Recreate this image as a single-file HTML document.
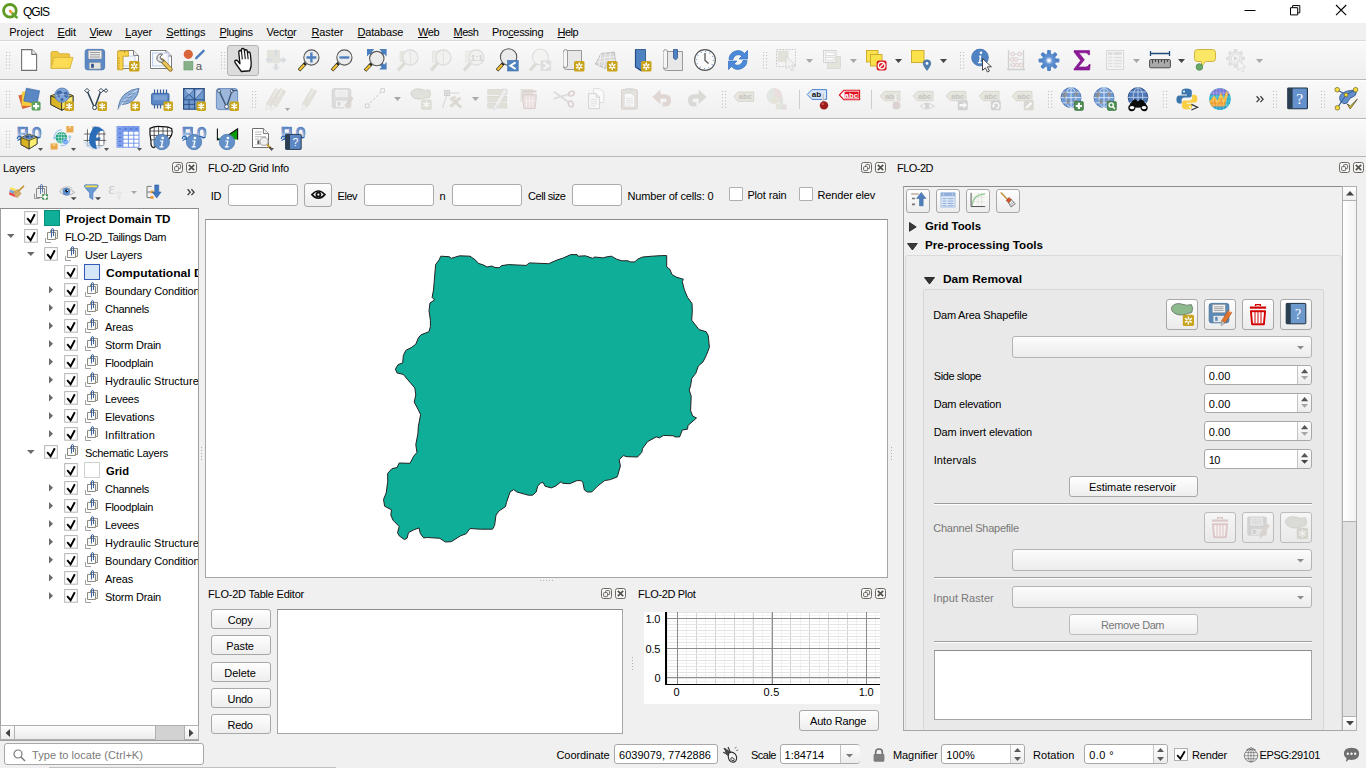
<!DOCTYPE html>
<html><head><meta charset="utf-8"><title>QGIS</title><style>
html,body{margin:0;padding:0}
body{width:1366px;height:768px;overflow:hidden;position:relative;background:#f0f0f0;font-family:"Liberation Sans",sans-serif;font-size:11px;color:#000}
body>div,body>span,body>svg{position:absolute;box-sizing:border-box}
svg{overflow:visible}
.t{white-space:nowrap}
u{text-decoration:underline;text-underline-offset:1px}
</style></head><body>
<div style="left:0px;top:0px;width:1366px;height:23px;background:#fff;"></div>
<svg style="left:2px;top:3px" width="18" height="18" viewBox="0 0 18 18"><circle cx="7.9" cy="7.8" r="6.3" fill="#fff" stroke="#5f9a24" stroke-width="2.8"/><path d="M7.9 7.9L10.6 10.5" stroke="#f08a24" stroke-width="2.2" stroke-linecap="round"/><path d="M9.4 9.4L11 11" stroke="#f4c84a" stroke-width="2"/><path d="M10.8 10.7L14.6 14.4" stroke="#62a02e" stroke-width="2.7" stroke-linecap="round"/></svg>
<span id="t1" class="t" style="left:23px;top:3.5px;font-size:12px;line-height:16px;color:#000;letter-spacing:-1.004px;">QGIS</span>
<svg style="left:1244px;top:4px" width="12" height="12"><path d="M0.5 6.5H11.5" stroke="#000" stroke-width="1" fill="none"/></svg>
<svg style="left:1290px;top:4.5px" width="11" height="11"><path d="M0.5 2.7H7.7V9.9H0.5Z M2.6 2.7V0.6H9.8V7.8H7.7" stroke="#000" stroke-width="1" fill="none"/></svg>
<svg style="left:1336px;top:5px" width="11" height="11"><path d="M0 0L10.2 10.2M10.2 0L0 10.2" stroke="#000" stroke-width="1.1" fill="none"/></svg>
<div style="left:0px;top:23px;width:1366px;height:18px;background:#f0f0f0;border-bottom:1px solid #d9d9d9;"></div>
<span id="t2" class="t" style="left:9.2px;top:24.5px;font-size:11px;line-height:15px;color:#000;letter-spacing:0.064px;">Pro<u>j</u>ect</span>
<span id="t3" class="t" style="left:57.5px;top:24.5px;font-size:11px;line-height:15px;color:#000;letter-spacing:-0.167px;"><u>E</u>dit</span>
<span id="t4" class="t" style="left:89.6px;top:24.5px;font-size:11px;line-height:15px;color:#000;letter-spacing:-0.414px;"><u>V</u>iew</span>
<span id="t5" class="t" style="left:125.2px;top:24.5px;font-size:11px;line-height:15px;color:#000;letter-spacing:-0.146px;"><u>L</u>ayer</span>
<span id="t6" class="t" style="left:166.3px;top:24.5px;font-size:11px;line-height:15px;color:#000;letter-spacing:-0.081px;"><u>S</u>ettings</span>
<span id="t7" class="t" style="left:219.6px;top:24.5px;font-size:11px;line-height:15px;color:#000;letter-spacing:-0.440px;"><u>P</u>lugins</span>
<span id="t8" class="t" style="left:266.4px;top:24.5px;font-size:11px;line-height:15px;color:#000;letter-spacing:-0.165px;">Vect<u>o</u>r</span>
<span id="t9" class="t" style="left:311.5px;top:24.5px;font-size:11px;line-height:15px;color:#000;letter-spacing:-0.118px;"><u>R</u>aster</span>
<span id="t10" class="t" style="left:357.6px;top:24.5px;font-size:11px;line-height:15px;color:#000;letter-spacing:-0.199px;"><u>D</u>atabase</span>
<span id="t11" class="t" style="left:418px;top:24.5px;font-size:11px;line-height:15px;color:#000;letter-spacing:-0.341px;"><u>W</u>eb</span>
<span id="t12" class="t" style="left:453.6px;top:24.5px;font-size:11px;line-height:15px;color:#000;letter-spacing:-0.527px;"><u>M</u>esh</span>
<span id="t13" class="t" style="left:492px;top:24.5px;font-size:11px;line-height:15px;color:#000;letter-spacing:-0.322px;">Pro<u>c</u>essing</span>
<span id="t14" class="t" style="left:557.5px;top:24.5px;font-size:11px;line-height:15px;color:#000;letter-spacing:-0.481px;"><u>H</u>elp</span>
<div style="left:0px;top:41px;width:1366px;height:39px;background:linear-gradient(#fff 0,#fff 1px,#f9f9f9 1px,#efefef 100%);border-bottom:1px solid #b8b8b8;"></div>
<div style="left:0px;top:80px;width:1366px;height:39px;background:linear-gradient(#fff 0,#fff 1px,#f9f9f9 1px,#efefef 100%);border-bottom:1px solid #b8b8b8;"></div>
<div style="left:0px;top:119px;width:1366px;height:38px;background:linear-gradient(#fff 0,#fff 1px,#f9f9f9 1px,#efefef 100%);border-bottom:1px solid #b8b8b8;"></div>
<svg style="left:5.6px;top:52px" width="6" height="22"><rect x="0" y="0.00" width="1.1" height="1.1" fill="#bcbcbc"/><rect x="3.2" y="0.00" width="1.1" height="1.1" fill="#bcbcbc"/><rect x="1" y="1.00" width="1" height="1" fill="#fff"/><rect x="4.2" y="1.00" width="1" height="1" fill="#fff"/><rect x="0" y="3.15" width="1.1" height="1.1" fill="#bcbcbc"/><rect x="3.2" y="3.15" width="1.1" height="1.1" fill="#bcbcbc"/><rect x="1" y="4.15" width="1" height="1" fill="#fff"/><rect x="4.2" y="4.15" width="1" height="1" fill="#fff"/><rect x="0" y="6.30" width="1.1" height="1.1" fill="#bcbcbc"/><rect x="3.2" y="6.30" width="1.1" height="1.1" fill="#bcbcbc"/><rect x="1" y="7.30" width="1" height="1" fill="#fff"/><rect x="4.2" y="7.30" width="1" height="1" fill="#fff"/><rect x="0" y="9.45" width="1.1" height="1.1" fill="#bcbcbc"/><rect x="3.2" y="9.45" width="1.1" height="1.1" fill="#bcbcbc"/><rect x="1" y="10.45" width="1" height="1" fill="#fff"/><rect x="4.2" y="10.45" width="1" height="1" fill="#fff"/><rect x="0" y="12.60" width="1.1" height="1.1" fill="#bcbcbc"/><rect x="3.2" y="12.60" width="1.1" height="1.1" fill="#bcbcbc"/><rect x="1" y="13.60" width="1" height="1" fill="#fff"/><rect x="4.2" y="13.60" width="1" height="1" fill="#fff"/><rect x="0" y="15.75" width="1.1" height="1.1" fill="#bcbcbc"/><rect x="3.2" y="15.75" width="1.1" height="1.1" fill="#bcbcbc"/><rect x="1" y="16.75" width="1" height="1" fill="#fff"/><rect x="4.2" y="16.75" width="1" height="1" fill="#fff"/></svg>
<svg style="left:17.0px;top:48.0px" width="24" height="24" viewBox="0 0 24 24"><path d="M4.6 1.6H14.8L19.6 6.4V22.4H4.6Z" fill="#fff" stroke="#707070" stroke-width="1.1"/><path d="M14.8 1.6V6.4H19.6" fill="#f0f0f0" stroke="#707070" stroke-width="1.1" stroke-linejoin="round"/></svg>
<svg style="left:50.0px;top:48.0px" width="24" height="24" viewBox="0 0 24 24"><path d="M1 20V4.8Q1 3.6 2.2 3.6H7.6L9.4 5.8H18.4Q19.6 5.8 19.6 7V20Z" fill="#f0c840" stroke="#d3ab34" stroke-width="0.9"/><path d="M4 9.4H23L20 20.4H1Z" fill="#fcdb55" stroke="#d8b23c" stroke-width="0.9" stroke-linejoin="round"/></svg>
<svg style="left:83.0px;top:48.0px" width="24" height="24" viewBox="0 0 24 24"><rect x="2.2" y="1.4" width="19.4" height="20.4" rx="2.4" fill="#5b89c6" stroke="#4a78b6" stroke-width="0.9"/><rect x="5.2" y="2.6" width="13.6" height="8.4" rx="0.8" fill="#f6f6f6" stroke="#8a8a8a" stroke-width="0.6"/><path d="M6.8 4.6H17.2M6.8 6.8H17.2M6.8 9H17.2" stroke="#7a7a7a" stroke-width="0.8"/><rect x="6.2" y="14.4" width="11.6" height="6.6" rx="0.6" fill="#e4e4e4" stroke="#8a8a8a" stroke-width="0.5"/><rect x="8.2" y="15.8" width="2.6" height="4" fill="#2f4f86"/></svg>
<svg style="left:116.0px;top:48.0px" width="24" height="24" viewBox="0 0 24 24"><path d="M3.5 2.5H17.5L22.5 7.5V20.5H3.5Z" fill="#fff" stroke="#7a7a7a" stroke-width="1"/><path d="M17.5 2.5V7.5H22.5" fill="#ececec" stroke="#7a7a7a" stroke-width="1"/><rect x="7" y="8" width="12" height="10" fill="#f4f6fb" stroke="#b9c6e4" stroke-width="0.8"/><path d="M1.6 3H12.4V8.2H7V21.8H1.6Z" fill="#f8d24a" stroke="#cfa42a" stroke-width="0.9"/><path d="M1.6 10H4M1.6 12.5H3.4M1.6 15H4M1.6 17.5H3.4M1.6 20H4M8.5 3V5" stroke="#b38a1c" stroke-width="0.7"/><rect x="13" y="13" width="10.5" height="10.5" rx="1.6" fill="#c8a41c"/><path d="M18.25 14.6V21.9M15.1 16.4L21.4 20.1M21.4 16.4L15.1 20.1" stroke="#fff" stroke-width="1.5"/><circle cx="18.25" cy="18.25" r="1.1" fill="#c8a41c"/></svg>
<svg style="left:149.0px;top:48.0px" width="24" height="24" viewBox="0 0 24 24"><path d="M1.5 2.5H17L22.5 8V20.5H1.5Z" fill="#fff" stroke="#7a7a7a" stroke-width="1"/><path d="M17 2.5V8H22.5" fill="#ececec" stroke="#7a7a7a" stroke-width="1"/><rect x="3.6" y="5" width="15.6" height="13" fill="#f6f8fc" stroke="#b4c4ea" stroke-width="0.9"/><path d="M13 12.5L21.5 21.5" stroke="#8b6b1e" stroke-width="4.4" stroke-linecap="round"/><path d="M13.4 12.8L21.4 21.2" stroke="#e9c75a" stroke-width="2.8" stroke-linecap="round"/><path d="M13.6 6.2A4.2 4.2 0 1 0 15.4 12.6L12.2 11.6L11 9L13.6 6.2Z" fill="#e8e8e8" stroke="#555" stroke-width="0.9" stroke-linejoin="round"/></svg>
<svg style="left:182.0px;top:48.0px" width="24" height="24" viewBox="0 0 24 24"><circle cx="6.3" cy="6.3" r="4.6" fill="#d9653a"/><rect x="1.9" y="13.4" width="9" height="8.6" fill="#86b088" stroke="#6c9c70" stroke-width="0.6"/><path d="M14.2 10.2L21.6 2.8" stroke="#4f7fbf" stroke-width="2.4" stroke-linecap="round"/><text x="13.8" y="21.6" font-family="Liberation Sans, sans-serif" font-size="11.5" fill="#555">a</text></svg>
<svg style="left:220.6px;top:52px" width="6" height="22"><rect x="0" y="0.00" width="1.1" height="1.1" fill="#bcbcbc"/><rect x="3.2" y="0.00" width="1.1" height="1.1" fill="#bcbcbc"/><rect x="1" y="1.00" width="1" height="1" fill="#fff"/><rect x="4.2" y="1.00" width="1" height="1" fill="#fff"/><rect x="0" y="3.15" width="1.1" height="1.1" fill="#bcbcbc"/><rect x="3.2" y="3.15" width="1.1" height="1.1" fill="#bcbcbc"/><rect x="1" y="4.15" width="1" height="1" fill="#fff"/><rect x="4.2" y="4.15" width="1" height="1" fill="#fff"/><rect x="0" y="6.30" width="1.1" height="1.1" fill="#bcbcbc"/><rect x="3.2" y="6.30" width="1.1" height="1.1" fill="#bcbcbc"/><rect x="1" y="7.30" width="1" height="1" fill="#fff"/><rect x="4.2" y="7.30" width="1" height="1" fill="#fff"/><rect x="0" y="9.45" width="1.1" height="1.1" fill="#bcbcbc"/><rect x="3.2" y="9.45" width="1.1" height="1.1" fill="#bcbcbc"/><rect x="1" y="10.45" width="1" height="1" fill="#fff"/><rect x="4.2" y="10.45" width="1" height="1" fill="#fff"/><rect x="0" y="12.60" width="1.1" height="1.1" fill="#bcbcbc"/><rect x="3.2" y="12.60" width="1.1" height="1.1" fill="#bcbcbc"/><rect x="1" y="13.60" width="1" height="1" fill="#fff"/><rect x="4.2" y="13.60" width="1" height="1" fill="#fff"/><rect x="0" y="15.75" width="1.1" height="1.1" fill="#bcbcbc"/><rect x="3.2" y="15.75" width="1.1" height="1.1" fill="#bcbcbc"/><rect x="1" y="16.75" width="1" height="1" fill="#fff"/><rect x="4.2" y="16.75" width="1" height="1" fill="#fff"/></svg>
<div style="left:227px;top:45px;width:32px;height:31px;background:#dcdcdc;border:1px solid #b4b4b4;border-radius:3px;"></div>
<svg style="left:231.0px;top:48.0px" width="24" height="24" viewBox="0 0 24 24"><g transform="translate(12 12) rotate(-6) scale(1 1.13) translate(-12 -11.6)"><path d="M9.2 21.6L4.2 13.8Q3 11.8 4.4 11.2Q5.8 10.8 7 12.4L8.6 14.6V4.6Q8.6 3 10 3Q11.4 3 11.4 4.6V3Q11.4 1.4 12.9 1.4Q14.4 1.4 14.4 3V4.4Q14.4 2.9 15.8 2.9Q17.2 2.9 17.2 4.4V6.4Q17.2 5 18.5 5Q19.9 5 19.9 6.6V14.4Q19.9 18 17.6 21.6Z" fill="#fff" stroke="#111" stroke-width="1.3" stroke-linejoin="round"/><path d="M11.4 4.6V11M14.4 4.4V11M17.2 6.4V11.4" stroke="#111" stroke-width="1.1"/></g></svg>
<svg style="left:264.0px;top:48.0px" width="24" height="24" viewBox="0 0 24 24"><rect x="3" y="2" width="13" height="13" fill="#e4e3dc"/><path d="M12 1L15.5 5H13.4V9H10.6V5H8.5ZM12 23L8.5 19H10.6V15.4H13.4V19H15.5ZM1.4 12L5.4 8.5V10.6H9V13.4H5.4V15.5ZM22.6 12L18.6 15.5V13.4H15V10.6H18.6V8.5Z" fill="#d8dcdf" stroke="#e8eaec" stroke-width="0.5"/></svg>
<svg style="left:297.0px;top:48.0px" width="24" height="24" viewBox="0 0 24 24"><path d="M8.6 15.2L2 22.3" stroke="#222" stroke-width="3.4" stroke-linecap="butt"/><path d="M7.2 16.8L2.4 21.9" stroke="#f2c531" stroke-width="2.2"/><circle cx="14.4" cy="9.5" r="7.6" fill="#ebebeb" stroke="#5a5a5a" stroke-width="1.1"/><path d="M14.4 4.6V14.4M9.5 9.5H19.3" stroke="#4e80bf" stroke-width="2.4"/></svg>
<svg style="left:330.0px;top:48.0px" width="24" height="24" viewBox="0 0 24 24"><path d="M8.6 15.2L2 22.3" stroke="#222" stroke-width="3.4" stroke-linecap="butt"/><path d="M7.2 16.8L2.4 21.9" stroke="#f2c531" stroke-width="2.2"/><circle cx="14.4" cy="9.5" r="7.6" fill="#ebebeb" stroke="#5a5a5a" stroke-width="1.1"/><path d="M9.5 9.5H19.3" stroke="#4e80bf" stroke-width="2.4"/></svg>
<svg style="left:363.0px;top:48.0px" width="24" height="24" viewBox="0 0 24 24"><path d="M4 1H11.4L9 3.4L12.4 6.8L9.8 9.4L6.4 6L4 8.4Z" fill="#4a7ebf"/><path d="M23.6 1V8.4L21.2 6L17.8 9.4L15.2 6.8L18.6 3.4L16.2 1Z" fill="#4a7ebf"/><path d="M23.6 21.4H16.2L18.6 19L15.2 15.6L17.8 13L21.2 16.4L23.6 14Z" fill="#4a7ebf"/><path d="M8.6 15.6L2 22.6" stroke="#222" stroke-width="3.4"/><path d="M7.2 17.2L2.4 22.2" stroke="#f2c531" stroke-width="2.2"/><circle cx="13.8" cy="10.6" r="7.2" fill="#ebebeb" stroke="#5a5a5a" stroke-width="1.1"/></svg>
<svg style="left:396.0px;top:48.0px" width="24" height="24" viewBox="0 0 24 24"><rect x="3.5" y="3" width="9" height="11" fill="#e6e5de"/><path d="M8.6 15.2L2 22.3" stroke="#dcdcd6" stroke-width="3.2"/><circle cx="14.4" cy="9.5" r="7.6" fill="#f1f1ef" stroke="#dadada" stroke-width="1.1"/><path d="M14.4 3V16" stroke="#e2e2e2" stroke-width="1"/></svg>
<svg style="left:429.0px;top:48.0px" width="24" height="24" viewBox="0 0 24 24"><rect x="3.5" y="3" width="9" height="11" fill="#ecebe6" stroke="#e0e0e0" stroke-width="0.6"/><path d="M8.6 15.2L2 22.3" stroke="#dcdcd6" stroke-width="3.2"/><circle cx="14.4" cy="9.5" r="7.6" fill="#f1f1ef" stroke="#dadada" stroke-width="1.1"/><path d="M14.4 3V16" stroke="#e2e2e2" stroke-width="1"/></svg>
<svg style="left:462.0px;top:48.0px" width="24" height="24" viewBox="0 0 24 24"><rect x="3.5" y="3" width="9" height="11" fill="#efeeea" stroke="#e2e2e2" stroke-width="0.6"/><path d="M8.6 15.2L2 22.3" stroke="#dcdcd6" stroke-width="3.2"/><circle cx="14.4" cy="9.5" r="7.6" fill="#f1f1ef" stroke="#dadada" stroke-width="1.1"/><text x="8.6" y="13" font-family="Liberation Sans, sans-serif" font-size="8.5" font-weight="bold" fill="#d2d2d2">1:1</text></svg>
<svg style="left:495.0px;top:48.0px" width="24" height="24" viewBox="0 0 24 24"><path d="M8.6 15.2L2 22.3" stroke="#222" stroke-width="3.4" stroke-linecap="butt"/><path d="M7.2 16.8L2.4 21.9" stroke="#f2c531" stroke-width="2.2"/><circle cx="13.6" cy="9" r="8.2" fill="#ebebeb" stroke="#5a5a5a" stroke-width="1.1"/><rect x="12.6" y="12.4" width="10.6" height="10.6" fill="#4f82c0" stroke="#3f6ea8" stroke-width="0.6"/><path d="M20.6 14.4L15.4 17.7L20.6 21" stroke="#fff" stroke-width="2" fill="none"/></svg>
<svg style="left:528.0px;top:48.0px" width="24" height="24" viewBox="0 0 24 24"><path d="M8.6 15.2L2 22.3" stroke="#dcdcd6" stroke-width="3.2"/><circle cx="12.4" cy="9" r="8" fill="#f3f3f1" stroke="#dcdcdc" stroke-width="1.1"/><rect x="12.6" y="12.4" width="10.6" height="10.6" fill="#dedede"/><path d="M15.4 14.4L20.6 17.7L15.4 21" stroke="#f6f6f6" stroke-width="2" fill="none"/></svg>
<svg style="left:561.0px;top:48.0px" width="24" height="24" viewBox="0 0 24 24"><path d="M4 2.5H20.5V21.5H5.5Q2.5 21.5 2.5 18.5V4Z" fill="#e8e8e8" stroke="#8f8f8f" stroke-width="0.9"/><path d="M2.5 4Q2.5 1.5 4.5 1.5Q6.5 1.5 6.5 4V18Q6.5 19.5 4.5 19.5Q2.5 19.5 2.5 18" fill="#f6f6f6" stroke="#8f8f8f" stroke-width="0.9"/><rect x="13" y="13" width="10.5" height="10.5" rx="1.6" fill="#c8a41c"/><path d="M18.25 14.6V21.9M15.1 16.4L21.4 20.1M21.4 16.4L15.1 20.1" stroke="#fff" stroke-width="1.5"/><circle cx="18.25" cy="18.25" r="1.1" fill="#c8a41c"/></svg>
<svg style="left:594.0px;top:48.0px" width="24" height="24" viewBox="0 0 24 24"><path d="M1.5 16L7 5.5L20.5 4L21.5 14.5L11 20.5Z" fill="#d9d9d9" stroke="#b4b4b4" stroke-width="0.8"/><path d="M4.5 10.5L20.8 8.5M3 14L21 12M7 5.5L5 18M11.5 5L9.5 20M16 4.5L16 17.5" stroke="#f2f2f2" stroke-width="0.9"/><rect x="13" y="13" width="10.5" height="10.5" rx="1.6" fill="#c8a41c"/><path d="M18.25 14.6V21.9M15.1 16.4L21.4 20.1M21.4 16.4L15.1 20.1" stroke="#fff" stroke-width="1.5"/><circle cx="18.25" cy="18.25" r="1.1" fill="#c8a41c"/></svg>
<svg style="left:628.0px;top:48.0px" width="24" height="24" viewBox="0 0 24 24"><path d="M7.5 1.5H17.5V21L13.5 23L7.5 19Z" fill="#4f82c0" stroke="#2f5590" stroke-width="0.9"/><path d="M7.5 1.5V19L13 22.6" fill="none" stroke="#244a86" stroke-width="1.2"/><rect x="13" y="13" width="10.5" height="10.5" rx="1.6" fill="#c8a41c"/><path d="M18.25 14.6V21.9M15.1 16.4L21.4 20.1M21.4 16.4L15.1 20.1" stroke="#fff" stroke-width="1.5"/><circle cx="18.25" cy="18.25" r="1.1" fill="#c8a41c"/></svg>
<svg style="left:660.0px;top:48.0px" width="24" height="24" viewBox="0 0 24 24"><path d="M5 3.5H22.5V22.5H6.5Q3.5 22.5 3.5 19.5V5Z" fill="#e8e8e8" stroke="#8f8f8f" stroke-width="0.9"/><path d="M3.5 4Q3.5 1.5 5.5 1.5Q7.5 1.5 7.5 4V19Q7.5 20.5 5.5 20.5Q3.5 20.5 3.5 19" fill="#f6f6f6" stroke="#8f8f8f" stroke-width="0.9"/><path d="M13.5 1.5H17.5V10L15.5 12L13.5 10Z" fill="#4f82c0" stroke="#2f5590" stroke-width="0.8"/></svg>
<svg style="left:693.0px;top:48.0px" width="24" height="24" viewBox="0 0 24 24"><circle cx="12" cy="12" r="10.4" fill="#fbfbfb" stroke="#555" stroke-width="1.1"/><circle cx="12" cy="12" r="8.6" fill="none" stroke="#5b8fd0" stroke-width="1.2" stroke-dasharray="0.9 3.6"/><path d="M12 5V12.4L15.6 15.6" fill="none" stroke="#555" stroke-width="1.3"/></svg>
<svg style="left:726.0px;top:48.0px" width="24" height="24" viewBox="0 0 24 24"><path d="M3 11.5A9 9 0 0 1 18.5 5.5L21.5 2.5V11H13L16 8A5.5 5.5 0 0 0 7 11.5Z" fill="#4a8ad8" stroke="#2f6cc0" stroke-width="0.7"/><path d="M21 12.5A9 9 0 0 1 5.5 18.5L2.5 21.5V13H11L8 16A5.5 5.5 0 0 0 17 12.5Z" fill="#4a8ad8" stroke="#2f6cc0" stroke-width="0.7"/></svg>
<svg style="left:762.6px;top:52px" width="6" height="22"><rect x="0" y="0.00" width="1.1" height="1.1" fill="#bcbcbc"/><rect x="3.2" y="0.00" width="1.1" height="1.1" fill="#bcbcbc"/><rect x="1" y="1.00" width="1" height="1" fill="#fff"/><rect x="4.2" y="1.00" width="1" height="1" fill="#fff"/><rect x="0" y="3.15" width="1.1" height="1.1" fill="#bcbcbc"/><rect x="3.2" y="3.15" width="1.1" height="1.1" fill="#bcbcbc"/><rect x="1" y="4.15" width="1" height="1" fill="#fff"/><rect x="4.2" y="4.15" width="1" height="1" fill="#fff"/><rect x="0" y="6.30" width="1.1" height="1.1" fill="#bcbcbc"/><rect x="3.2" y="6.30" width="1.1" height="1.1" fill="#bcbcbc"/><rect x="1" y="7.30" width="1" height="1" fill="#fff"/><rect x="4.2" y="7.30" width="1" height="1" fill="#fff"/><rect x="0" y="9.45" width="1.1" height="1.1" fill="#bcbcbc"/><rect x="3.2" y="9.45" width="1.1" height="1.1" fill="#bcbcbc"/><rect x="1" y="10.45" width="1" height="1" fill="#fff"/><rect x="4.2" y="10.45" width="1" height="1" fill="#fff"/><rect x="0" y="12.60" width="1.1" height="1.1" fill="#bcbcbc"/><rect x="3.2" y="12.60" width="1.1" height="1.1" fill="#bcbcbc"/><rect x="1" y="13.60" width="1" height="1" fill="#fff"/><rect x="4.2" y="13.60" width="1" height="1" fill="#fff"/><rect x="0" y="15.75" width="1.1" height="1.1" fill="#bcbcbc"/><rect x="3.2" y="15.75" width="1.1" height="1.1" fill="#bcbcbc"/><rect x="1" y="16.75" width="1" height="1" fill="#fff"/><rect x="4.2" y="16.75" width="1" height="1" fill="#fff"/></svg>
<svg style="left:775.0px;top:48.0px" width="24" height="24" viewBox="0 0 24 24"><rect x="1.5" y="1.5" width="19" height="17" fill="none" stroke="#c8c8c8" stroke-width="1" stroke-dasharray="1.6 1.4"/><rect x="2.5" y="2.5" width="11" height="11.5" fill="#e2e1da"/><path d="M11 8L11 21L14.2 18L16.6 23L18.8 22L16.4 17.2H20.6Z" fill="#f2f2f2" stroke="#d6d6d6" stroke-width="0.9" stroke-linejoin="round"/></svg>
<svg style="left:805.5px;top:58.5px" width="7" height="4"><path d="M0 0H7L3.5 4Z" fill="#a8a8a8"/></svg>
<svg style="left:820.0px;top:48.0px" width="24" height="24" viewBox="0 0 24 24"><rect x="7.5" y="8.5" width="13" height="12" fill="#e3e2db" stroke="#d6d6d0" stroke-width="0.7"/><rect x="3.5" y="2.5" width="12.6" height="12" fill="#f2f2f2" stroke="#d2d2d2" stroke-width="0.9"/><rect x="5.5" y="4.8" width="8.6" height="2.6" fill="#fff" stroke="#d4d4d4" stroke-width="0.7"/><rect x="5.5" y="9.4" width="8.6" height="2.6" fill="#fff" stroke="#d4d4d4" stroke-width="0.7"/></svg>
<svg style="left:850.0px;top:58.5px" width="7" height="4"><path d="M0 0H7L3.5 4Z" fill="#a8a8a8"/></svg>
<svg style="left:865.0px;top:48.0px" width="24" height="24" viewBox="0 0 24 24"><rect x="1.5" y="2.5" width="11.5" height="11.5" fill="#fbe14a" stroke="#c9a72a" stroke-width="0.9"/><rect x="5.5" y="6.5" width="11.5" height="11.5" fill="#fbe14a" stroke="#c9a72a" stroke-width="0.9"/><rect x="11.6" y="12.6" width="10" height="10" rx="2" fill="#d8232a"/><circle cx="16.6" cy="17.6" r="3.3" fill="#d8232a" stroke="#fff" stroke-width="1.3"/><path d="M14.4 19.8L18.8 15.4" stroke="#fff" stroke-width="1.3"/></svg>
<svg style="left:895.0px;top:58.5px" width="7" height="4"><path d="M0 0H7L3.5 4Z" fill="#444"/></svg>
<svg style="left:910.0px;top:48.0px" width="24" height="24" viewBox="0 0 24 24"><rect x="1.5" y="2.5" width="12.5" height="12" fill="#fbe14a" stroke="#c9a72a" stroke-width="0.9"/><path d="M17 22.5Q13.2 17.6 13.2 15.6A3.8 3.8 0 0 1 20.8 15.6Q20.8 17.6 17 22.5Z" fill="#4f7fae" stroke="#3f6a96" stroke-width="0.6"/><circle cx="17" cy="15.4" r="1.4" fill="#fff"/></svg>
<svg style="left:940.0px;top:58.5px" width="7" height="4"><path d="M0 0H7L3.5 4Z" fill="#444"/></svg>
<svg style="left:959.6px;top:52px" width="6" height="22"><rect x="0" y="0.00" width="1.1" height="1.1" fill="#bcbcbc"/><rect x="3.2" y="0.00" width="1.1" height="1.1" fill="#bcbcbc"/><rect x="1" y="1.00" width="1" height="1" fill="#fff"/><rect x="4.2" y="1.00" width="1" height="1" fill="#fff"/><rect x="0" y="3.15" width="1.1" height="1.1" fill="#bcbcbc"/><rect x="3.2" y="3.15" width="1.1" height="1.1" fill="#bcbcbc"/><rect x="1" y="4.15" width="1" height="1" fill="#fff"/><rect x="4.2" y="4.15" width="1" height="1" fill="#fff"/><rect x="0" y="6.30" width="1.1" height="1.1" fill="#bcbcbc"/><rect x="3.2" y="6.30" width="1.1" height="1.1" fill="#bcbcbc"/><rect x="1" y="7.30" width="1" height="1" fill="#fff"/><rect x="4.2" y="7.30" width="1" height="1" fill="#fff"/><rect x="0" y="9.45" width="1.1" height="1.1" fill="#bcbcbc"/><rect x="3.2" y="9.45" width="1.1" height="1.1" fill="#bcbcbc"/><rect x="1" y="10.45" width="1" height="1" fill="#fff"/><rect x="4.2" y="10.45" width="1" height="1" fill="#fff"/><rect x="0" y="12.60" width="1.1" height="1.1" fill="#bcbcbc"/><rect x="3.2" y="12.60" width="1.1" height="1.1" fill="#bcbcbc"/><rect x="1" y="13.60" width="1" height="1" fill="#fff"/><rect x="4.2" y="13.60" width="1" height="1" fill="#fff"/><rect x="0" y="15.75" width="1.1" height="1.1" fill="#bcbcbc"/><rect x="3.2" y="15.75" width="1.1" height="1.1" fill="#bcbcbc"/><rect x="1" y="16.75" width="1" height="1" fill="#fff"/><rect x="4.2" y="16.75" width="1" height="1" fill="#fff"/></svg>
<svg style="left:970.0px;top:48.0px" width="24" height="24" viewBox="0 0 24 24"><circle cx="10" cy="9.5" r="8.4" fill="#4f82c3" stroke="#3e6fae" stroke-width="0.7"/><path d="M9.2 7.6H11.4L10.4 14H11.8L11.6 15.2H7.8L8 14H9L9.7 8.8H8.9Z" fill="#fff"/><circle cx="11" cy="4.8" r="1.3" fill="#fff"/><path d="M12.5 10.5L12.5 22.4L15.4 19.8L17.4 24L19.4 23L17.4 18.8H21.4Z" fill="#fff" stroke="#333" stroke-width="0.9" stroke-linejoin="round"/></svg>
<svg style="left:1003.5px;top:48.0px" width="24" height="24" viewBox="0 0 24 24"><path d="M4.5 2V21M19.5 2V21M3 21.5H21" stroke="#d0d0d0" stroke-width="1.3" fill="none"/><path d="M4.5 6H19.5M4.5 11.5H19.5M4.5 17H19.5" stroke="#d8d8d8" stroke-width="0.9"/><g fill="#f2eaea" stroke="#d8cccc" stroke-width="0.8"><circle cx="8.8" cy="6" r="2"/><circle cx="15.6" cy="6" r="2"/><circle cx="8" cy="11.5" r="2"/><circle cx="12" cy="11.5" r="2"/><circle cx="9" cy="17" r="2"/><circle cx="13" cy="17" r="2"/><circle cx="17" cy="17" r="2"/></g></svg>
<svg style="left:1036.5px;top:48.0px" width="24" height="24" viewBox="0 0 24 24"><g transform="translate(12 12.5)"><g fill="#4f82c6"><rect x="-1.9" y="-10.4" width="3.8" height="20.8" rx="1"/><rect x="-1.9" y="-10.4" width="3.8" height="20.8" rx="1" transform="rotate(45)"/><rect x="-1.9" y="-10.4" width="3.8" height="20.8" rx="1" transform="rotate(90)"/><rect x="-1.9" y="-10.4" width="3.8" height="20.8" rx="1" transform="rotate(135)"/></g><circle r="6.8" fill="#5d8fd0" stroke="#4f82c6" stroke-width="0.6"/><circle r="3.4" fill="#8fb2e0"/><circle r="2" fill="#f2f5fa"/></g></svg>
<svg style="left:1069.5px;top:48.0px" width="24" height="24" viewBox="0 0 24 24"><path d="M4 2.6H19.6V6.8H18.4Q18 4.8 15.6 4.8H8.8L14.4 11.8L8.4 19H16Q18.4 19 19 16.6H20.2L19.6 22H4V21L10.6 12.6L4 4Z" fill="#8c1a97" stroke="#7a1186" stroke-width="0.6"/></svg>
<svg style="left:1102.5px;top:48.0px" width="24" height="24" viewBox="0 0 24 24"><rect x="3.5" y="2.5" width="17" height="19" fill="#f4f4f4" stroke="#d8d8d8" stroke-width="1"/><rect x="5" y="4" width="4.6" height="3" fill="#dedede"/><rect x="10.8" y="4" width="8" height="3" fill="#dedede"/><path d="M5 9.5H9.6M10.8 9.5H18.8M5 12.5H9.6M10.8 12.5H18.8M5 15.5H9.6M10.8 15.5H18.8M5 18.5H9.6M10.8 18.5H18.8" stroke="#e0e0e0" stroke-width="1.4"/></svg>
<svg style="left:1133.0px;top:58.5px" width="7" height="4"><path d="M0 0H7L3.5 4Z" fill="#a8a8a8"/></svg>
<svg style="left:1147.5px;top:48.0px" width="24" height="24" viewBox="0 0 24 24"><path d="M2.5 3V8M21.5 3V8M2.5 5.5H21.5" stroke="#1f4a7d" stroke-width="1.3" fill="none"/><rect x="1.6" y="11.6" width="20.8" height="8.2" rx="1" fill="#a9a9a9" stroke="#4a4a4a" stroke-width="1"/><path d="M4.5 12V15.4M7.5 12V14M10.5 12V15.4M13.5 12V14M16.5 12V15.4M19.5 12V14" stroke="#3a3a3a" stroke-width="0.9"/></svg>
<svg style="left:1178.0px;top:58.5px" width="7" height="4"><path d="M0 0H7L3.5 4Z" fill="#444"/></svg>
<svg style="left:1192.5px;top:48.0px" width="24" height="24" viewBox="0 0 24 24"><path d="M4.6 1.5H19.4Q22.5 1.5 22.5 4.6V10.4Q22.5 13.5 19.4 13.5H12.5L8.5 18.5V13.5H4.6Q1.5 13.5 1.5 10.4V4.6Q1.5 1.5 4.6 1.5Z" fill="#fbe766" stroke="#c9ab34" stroke-width="0.9"/><circle cx="6.4" cy="19" r="3.3" fill="#6aa86a" stroke="#4e8a50" stroke-width="0.8"/></svg>
<svg style="left:1225.0px;top:48.0px" width="24" height="24" viewBox="0 0 24 24"><g transform="translate(10.5 10.5)"><g fill="#e0e0e0"><rect x="-1.8" y="-9.6" width="3.6" height="19.2" rx="1"/><rect x="-1.8" y="-9.6" width="3.6" height="19.2" rx="1" transform="rotate(45)"/><rect x="-1.8" y="-9.6" width="3.6" height="19.2" rx="1" transform="rotate(90)"/><rect x="-1.8" y="-9.6" width="3.6" height="19.2" rx="1" transform="rotate(135)"/></g><circle r="6.6" fill="#ececec" stroke="#d8d8d8" stroke-width="0.8"/><circle r="4.2" fill="#f6f6f6" stroke="#dadada" stroke-width="0.8"/><path d="M-1.6 -2.6L2.6 0L-1.6 2.6Z" fill="#d6d6d6"/></g><path d="M13 12L13 22.4L15.6 20L17.4 23.8L19.2 23L17.4 19.2H21Z" fill="#f6f6f6" stroke="#d8d8d8" stroke-width="0.8" stroke-linejoin="round"/></svg>
<svg style="left:1256.0px;top:58.5px" width="7" height="4"><path d="M0 0H7L3.5 4Z" fill="#a8a8a8"/></svg>
<svg style="left:5.6px;top:91px" width="6" height="22"><rect x="0" y="0.00" width="1.1" height="1.1" fill="#bcbcbc"/><rect x="3.2" y="0.00" width="1.1" height="1.1" fill="#bcbcbc"/><rect x="1" y="1.00" width="1" height="1" fill="#fff"/><rect x="4.2" y="1.00" width="1" height="1" fill="#fff"/><rect x="0" y="3.15" width="1.1" height="1.1" fill="#bcbcbc"/><rect x="3.2" y="3.15" width="1.1" height="1.1" fill="#bcbcbc"/><rect x="1" y="4.15" width="1" height="1" fill="#fff"/><rect x="4.2" y="4.15" width="1" height="1" fill="#fff"/><rect x="0" y="6.30" width="1.1" height="1.1" fill="#bcbcbc"/><rect x="3.2" y="6.30" width="1.1" height="1.1" fill="#bcbcbc"/><rect x="1" y="7.30" width="1" height="1" fill="#fff"/><rect x="4.2" y="7.30" width="1" height="1" fill="#fff"/><rect x="0" y="9.45" width="1.1" height="1.1" fill="#bcbcbc"/><rect x="3.2" y="9.45" width="1.1" height="1.1" fill="#bcbcbc"/><rect x="1" y="10.45" width="1" height="1" fill="#fff"/><rect x="4.2" y="10.45" width="1" height="1" fill="#fff"/><rect x="0" y="12.60" width="1.1" height="1.1" fill="#bcbcbc"/><rect x="3.2" y="12.60" width="1.1" height="1.1" fill="#bcbcbc"/><rect x="1" y="13.60" width="1" height="1" fill="#fff"/><rect x="4.2" y="13.60" width="1" height="1" fill="#fff"/><rect x="0" y="15.75" width="1.1" height="1.1" fill="#bcbcbc"/><rect x="3.2" y="15.75" width="1.1" height="1.1" fill="#bcbcbc"/><rect x="1" y="16.75" width="1" height="1" fill="#fff"/><rect x="4.2" y="16.75" width="1" height="1" fill="#fff"/></svg>
<svg style="left:17.0px;top:87.0px" width="24" height="24" viewBox="0 0 24 24"><path d="M1.4 8.6L10 6L14 19.4L5.4 22Z" fill="#d9663a"/><path d="M5 4.4L15.6 4.6L15.2 19L4.6 18.8Z" fill="#f4cc3e"/><path d="M9.4 1.2L22.6 3.8L20 16.6L6.8 14Z" fill="#5b88c4" stroke="#3f6aa6" stroke-width="0.7"/><rect x="14.6" y="14.6" width="9" height="9" rx="1.6" fill="#5da15f"/><path d="M19.1 16V22.2M16 19.1H22.2" stroke="#fff" stroke-width="2.1"/></svg>
<svg style="left:50.0px;top:87.0px" width="24" height="24" viewBox="0 0 24 24"><path d="M0.8 8.8L12 4.6L23 8.6V17.4L12 23.2L0.8 17.6Z" fill="#f3d232" stroke="#333" stroke-width="0.9" stroke-linejoin="round"/><path d="M0.8 8.8L11.6 13.6V23M11.6 13.6L23 8.6" fill="none" stroke="#333" stroke-width="0.9"/><path d="M11.6 13.6L23 8.6V17.4L11.6 23.2Z" fill="#fae96b"/><path d="M11.6 13.6L23 8.6V17.4L11.6 23.2Z" fill="none" stroke="#333" stroke-width="0.9"/><path d="M0.8 8.8L11.6 13.6V23.2L0.8 17.6Z" fill="#d9b424" stroke="#333" stroke-width="0.9"/><circle cx="12" cy="8.2" r="7.2" fill="#7fa4d8" stroke="#4c74ae" stroke-width="0.7"/><path d="M6.4 5.6Q8.6 3 11 3.8L12.4 6L10 7.6L9.4 10.4L7 9ZM13.6 5.4L16.8 4.8L18.4 8L17 11L14.4 9.4ZM10.4 11.6L13 11L13.6 13.6L11 14.4Z" fill="#3f66a2"/><path d="M5.6 8.6Q12 6 18.6 8.4" fill="none" stroke="#b8cdec" stroke-width="0.6"/><rect x="14.5" y="14.5" width="9.5" height="9.5" rx="1.4" fill="#c9a61e"/><path d="M19.25 16V22.5M16.4 17.6L22.1 20.9M22.1 17.6L16.4 20.9" stroke="#fff" stroke-width="1.5"/></svg>
<svg style="left:83.0px;top:87.0px" width="24" height="24" viewBox="0 0 24 24"><path d="M4 3.6L11.6 21L18 3.6" fill="none" stroke="#2e4254" stroke-width="1.5"/><path d="M18 3.6H23" stroke="#2e4254" stroke-width="1.3"/><g fill="#fff" stroke="#2e4254" stroke-width="1"><path d="M4 1.4L6.2 3.6L4 5.8L1.8 3.6Z"/><path d="M18 1.4L20.2 3.6L18 5.8L15.8 3.6Z"/><path d="M23 1.6L24.6 3.6L23 5.6L21.2 3.6Z"/><circle cx="11.6" cy="20.6" r="2"/></g><rect x="14.5" y="14.5" width="9.5" height="9.5" rx="1.4" fill="#c9a61e"/><path d="M19.25 16V22.5M16.4 17.6L22.1 20.9M22.1 17.6L16.4 20.9" stroke="#fff" stroke-width="1.5"/></svg>
<svg style="left:116.0px;top:87.0px" width="24" height="24" viewBox="0 0 24 24"><path d="M2 23Q3 12 9 7Q15 2 23 1.4Q22.4 8 18 12.6Q13 17.4 5 17.6Z" fill="#8fb0d8" stroke="#4a6c9c" stroke-width="0.8"/><path d="M2 23Q8 12 21 3" fill="none" stroke="#e8eff8" stroke-width="1"/><path d="M6.5 15L13 13.4M9 11.4L16 9.6M12 8L19 6" stroke="#4a6c9c" stroke-width="0.6"/><rect x="14.5" y="14.5" width="9.5" height="9.5" rx="1.4" fill="#c9a61e"/><path d="M19.25 16V22.5M16.4 17.6L22.1 20.9M22.1 17.6L16.4 20.9" stroke="#fff" stroke-width="1.5"/></svg>
<svg style="left:149.0px;top:87.0px" width="24" height="24" viewBox="0 0 24 24"><rect x="2.6" y="6.4" width="17.4" height="11.4" rx="1.2" fill="#5b88c4" stroke="#365f9c" stroke-width="0.9"/><rect x="4.6" y="8.2" width="13.4" height="5" fill="#7aa0d4"/><path d="M5.5 2.6V6.4M8.5 2.6V6.4M11.5 2.6V6.4M14.5 2.6V6.4M17.5 2.6V6.4M5.5 17.8V21.6M8.5 17.8V21.6M11.5 17.8V21.6" stroke="#365f9c" stroke-width="1.2"/><rect x="14.5" y="14.5" width="9.5" height="9.5" rx="1.4" fill="#c9a61e"/><path d="M19.25 16V22.5M16.4 17.6L22.1 20.9M22.1 17.6L16.4 20.9" stroke="#fff" stroke-width="1.5"/></svg>
<svg style="left:182.0px;top:87.0px" width="24" height="24" viewBox="0 0 24 24"><rect x="1.6" y="1.6" width="20.6" height="20.6" fill="#6f98cf" stroke="#274a7e" stroke-width="1.1"/><path d="M12.6 1.6V22.2M1.6 12.8H22.2M1.6 1.6L12.6 12.8M12.6 1.6L1.6 12.8M22.2 1.6L12.6 12.8M7 12.8V22.2M1.6 17.4H12.6" stroke="#274a7e" stroke-width="0.9" fill="none"/><path d="M2.6 2.6H11.6L7 7.4ZM13.6 11.6V3.4L21.2 2.6Z" fill="#a9c3e6"/><rect x="14.5" y="14.5" width="9.5" height="9.5" rx="1.4" fill="#c9a61e"/><path d="M19.25 16V22.5M16.4 17.6L22.1 20.9M22.1 17.6L16.4 20.9" stroke="#fff" stroke-width="1.5"/></svg>
<svg style="left:215.0px;top:87.0px" width="24" height="24" viewBox="0 0 24 24"><rect x="1.4" y="1.6" width="21.2" height="21" rx="2.6" fill="#9db7dc" stroke="#6d8fc0" stroke-width="1"/><path d="M4 3.6L11.6 20L17 3.6" fill="none" stroke="#3d5878" stroke-width="1.4"/><g fill="#e9eef6" stroke="#3d5878" stroke-width="0.9"><circle cx="4" cy="3.8" r="1.6"/><circle cx="17" cy="3.8" r="1.6"/><circle cx="11.6" cy="19.6" r="2"/></g><path d="M17 3.6H22" stroke="#3d5878" stroke-width="1.1"/><rect x="14.5" y="14.5" width="9.5" height="9.5" rx="1.4" fill="#c9a61e"/><path d="M19.25 16V22.5M16.4 17.6L22.1 20.9M22.1 17.6L16.4 20.9" stroke="#fff" stroke-width="1.5"/></svg>
<svg style="left:251.6px;top:91px" width="6" height="22"><rect x="0" y="0.00" width="1.1" height="1.1" fill="#bcbcbc"/><rect x="3.2" y="0.00" width="1.1" height="1.1" fill="#bcbcbc"/><rect x="1" y="1.00" width="1" height="1" fill="#fff"/><rect x="4.2" y="1.00" width="1" height="1" fill="#fff"/><rect x="0" y="3.15" width="1.1" height="1.1" fill="#bcbcbc"/><rect x="3.2" y="3.15" width="1.1" height="1.1" fill="#bcbcbc"/><rect x="1" y="4.15" width="1" height="1" fill="#fff"/><rect x="4.2" y="4.15" width="1" height="1" fill="#fff"/><rect x="0" y="6.30" width="1.1" height="1.1" fill="#bcbcbc"/><rect x="3.2" y="6.30" width="1.1" height="1.1" fill="#bcbcbc"/><rect x="1" y="7.30" width="1" height="1" fill="#fff"/><rect x="4.2" y="7.30" width="1" height="1" fill="#fff"/><rect x="0" y="9.45" width="1.1" height="1.1" fill="#bcbcbc"/><rect x="3.2" y="9.45" width="1.1" height="1.1" fill="#bcbcbc"/><rect x="1" y="10.45" width="1" height="1" fill="#fff"/><rect x="4.2" y="10.45" width="1" height="1" fill="#fff"/><rect x="0" y="12.60" width="1.1" height="1.1" fill="#bcbcbc"/><rect x="3.2" y="12.60" width="1.1" height="1.1" fill="#bcbcbc"/><rect x="1" y="13.60" width="1" height="1" fill="#fff"/><rect x="4.2" y="13.60" width="1" height="1" fill="#fff"/><rect x="0" y="15.75" width="1.1" height="1.1" fill="#bcbcbc"/><rect x="3.2" y="15.75" width="1.1" height="1.1" fill="#bcbcbc"/><rect x="1" y="16.75" width="1" height="1" fill="#fff"/><rect x="4.2" y="16.75" width="1" height="1" fill="#fff"/></svg>
<svg style="left:264.0px;top:87.0px" width="24" height="24" viewBox="0 0 24 24"><g transform="translate(-1 0)"><path d="M12.6 1.6L17.6 4.4L8.6 19.6L3.6 16.8Z" fill="#e3e1da" stroke="#d6d4ce" stroke-width="0.6"/><path d="M3.6 16.8L8.6 19.6L3 23.2Z" fill="#f0efec" stroke="#dcdcdc" stroke-width="0.6"/><path d="M14.4 2.4L10 10" stroke="#eeeeea" stroke-width="1.4"/></g><g transform="translate(4 0)"><path d="M12.6 1.6L17.6 4.4L8.6 19.6L3.6 16.8Z" fill="#e3e1da" stroke="#d6d4ce" stroke-width="0.6"/><path d="M3.6 16.8L8.6 19.6L3 23.2Z" fill="#f0efec" stroke="#dcdcdc" stroke-width="0.6"/><path d="M14.4 2.4L10 10" stroke="#eeeeea" stroke-width="1.4"/></g></svg>
<svg style="left:284.5px;top:108.0px" width="5" height="3"><path d="M0 0H5L2.5 3Z" fill="#a8a8a8"/></svg>
<svg style="left:297.0px;top:87.0px" width="24" height="24" viewBox="0 0 24 24"><g transform="translate(2 0)"><path d="M12.6 1.6L17.6 4.4L8.6 19.6L3.6 16.8Z" fill="#e3e1da" stroke="#d6d4ce" stroke-width="0.6"/><path d="M3.6 16.8L8.6 19.6L3 23.2Z" fill="#f0efec" stroke="#dcdcdc" stroke-width="0.6"/><path d="M14.4 2.4L10 10" stroke="#eeeeea" stroke-width="1.4"/></g></svg>
<svg style="left:330.0px;top:87.0px" width="24" height="24" viewBox="0 0 24 24"><rect x="2.2" y="1.6" width="18.6" height="19.4" rx="2" fill="#dcdcdc" stroke="#d2d2d2" stroke-width="0.8"/><rect x="5" y="2.8" width="13" height="7.8" fill="#f6f6f6" stroke="#d8d8d8" stroke-width="0.6"/><path d="M6.4 5H16.6M6.4 7H16.6M6.4 9H16.6" stroke="#dedede" stroke-width="0.8"/><rect x="6" y="13.8" width="11" height="6.4" fill="#f0f0f0"/><rect x="7.8" y="15" width="2.4" height="3.8" fill="#d4d4d4"/><path d="M20.4 9L23.6 11L17.4 21L14.2 19Z" fill="#dcd6d2"/><path d="M14.2 19L17.4 21L13.6 23.4Z" fill="#eee"/></svg>
<svg style="left:363.0px;top:87.0px" width="24" height="24" viewBox="0 0 24 24"><path d="M4.2 18.6L19.6 3.6" stroke="#d4d4d4" stroke-width="1.1" stroke-dasharray="2.4 1.8"/><rect x="17.8" y="1.6" width="3.6" height="3.6" fill="#f6f6f6" stroke="#cfcfcf" stroke-width="0.9"/><rect x="2.4" y="17" width="3.6" height="3.6" fill="#f6f6f6" stroke="#cfcfcf" stroke-width="0.9"/></svg>
<svg style="left:394.0px;top:97.0px" width="7" height="4"><path d="M0 0H7L3.5 4Z" fill="#a8a8a8"/></svg>
<svg style="left:408.0px;top:87.0px" width="24" height="24" viewBox="0 0 24 24"><path d="M3.4 4.4Q7.6 0.4 13 2.2Q17.4 4.4 21.4 2.8Q23.6 6.6 21.6 10.4Q17 11 14.6 11.6Q12 12.6 8 11.8Q1.4 9.6 3.4 4.4Z" fill="#e1e1dc" stroke="#d0d0cc" stroke-width="0.9"/><rect x="13.2" y="12.4" width="10.4" height="10.4" rx="1.6" fill="#dcdbd4"/><path d="M18.4 14V21.2M15.3 15.8L21.5 19.4M21.5 15.8L15.3 19.4" stroke="#f4f4f2" stroke-width="1.4"/></svg>
<svg style="left:441.0px;top:87.0px" width="24" height="24" viewBox="0 0 24 24"><rect x="3.6" y="3.6" width="5" height="5" fill="#f4f4f4" stroke="#c8c8c8" stroke-width="0.9"/><circle cx="6.1" cy="6.1" r="1.3" fill="none" stroke="#bdbdbd" stroke-width="0.8"/><path d="M8.6 6.1H18.6M5.6 8.6L1.6 21" stroke="#d4d4d4" stroke-width="1" fill="none"/><path d="M9.4 19.8L19.4 10.6" stroke="#dcdad2" stroke-width="3.2"/><path d="M10 10.6L20 20.6" stroke="#d8d6ce" stroke-width="2.6"/><path d="M8.4 11.4L13.6 8.4L15.6 11L10.6 14.4Z" fill="#dedcd6"/></svg>
<svg style="left:471.5px;top:97.0px" width="7" height="4"><path d="M0 0H7L3.5 4Z" fill="#a8a8a8"/></svg>
<svg style="left:485.5px;top:87.0px" width="24" height="24" viewBox="0 0 24 24"><rect x="1.8" y="2.4" width="19" height="5" fill="#e1e0d8" stroke="#d4d3cc" stroke-width="0.6"/><rect x="1.8" y="9.2" width="19" height="5" fill="#e1e0d8" stroke="#d4d3cc" stroke-width="0.6"/><rect x="1.8" y="16" width="19" height="5" fill="#e1e0d8" stroke="#d4d3cc" stroke-width="0.6"/><path d="M17.6 1.4L21.6 3.6L12.4 19.6L8.4 17.4Z" fill="#efeeec" stroke="#d4d4d4" stroke-width="0.7"/><path d="M8.4 17.4L12.4 19.6L7.6 22.8Z" fill="#f4f4f4" stroke="#d4d4d4" stroke-width="0.6"/></svg>
<svg style="left:518.0px;top:87.0px" width="24" height="24" viewBox="0 0 24 24"><rect x="2.6" y="2" width="12.6" height="13" fill="#e2e1da"/><path d="M4.6 4.4H18.4" stroke="#dccfcf" stroke-width="2"/><path d="M4.6 7.6H18.4L17.2 21.6H5.8Z" fill="#e9dfdf" stroke="#d9caca" stroke-width="0.9"/><path d="M8.4 9.4V20M11.5 9.4V20M14.6 9.4V20M5.4 14H17.6" stroke="#f6f0f0" stroke-width="1.1"/></svg>
<svg style="left:551.5px;top:87.0px" width="24" height="24" viewBox="0 0 24 24"><path d="M2.4 5L17 15.4M2.4 11.6L17.4 7" stroke="#dcdcdc" stroke-width="1.8" stroke-linecap="round"/><ellipse cx="19.4" cy="6.6" rx="3" ry="2.2" fill="none" stroke="#dccfd0" stroke-width="1.5" transform="rotate(-25 19.4 6.6)"/><ellipse cx="18.8" cy="17" rx="2.4" ry="3" fill="none" stroke="#dccfd0" stroke-width="1.5" transform="rotate(-30 18.8 17)"/></svg>
<svg style="left:584.0px;top:87.0px" width="24" height="24" viewBox="0 0 24 24"><path d="M9.6 1.6H16L19.8 5.4V15.6H9.6Z" fill="#fafafa" stroke="#dadada" stroke-width="0.9"/><path d="M4.6 6.6H12L15.6 10.2V21.6H4.6Z" fill="#f8f8f8" stroke="#d2d2d2" stroke-width="1"/><path d="M12 6.6V10.2H15.6" fill="none" stroke="#d2d2d2" stroke-width="0.9"/><path d="M6.6 12.4H13.4M6.6 14.6H13.4M6.6 16.8H13.4M6.6 19H11.6" stroke="#dedede" stroke-width="0.9"/></svg>
<svg style="left:618.0px;top:87.0px" width="24" height="24" viewBox="0 0 24 24"><rect x="3.6" y="2.6" width="15.6" height="19.4" rx="1" fill="#e4e3dc" stroke="#d8cccc" stroke-width="1"/><rect x="7.4" y="1" width="8" height="3.6" rx="0.8" fill="#dcdcdc"/><path d="M6.2 6.2H13.4L16.8 9.6V20H6.2Z" fill="#f9f9f9" stroke="#d6d6d6" stroke-width="0.8"/><path d="M8 11.4H15M8 13.6H15M8 15.8H15M8 18H13" stroke="#dedede" stroke-width="0.9"/></svg>
<svg style="left:650.5px;top:87.0px" width="24" height="24" viewBox="0 0 24 24"><path d="M1.4 10L9.4 2.6V7.2H13.6Q20 7.2 20 13.4Q20 19.6 13.6 19.6H11.6V15.2H13.4Q15.8 15.2 15.8 13.2Q15.8 11.6 13.4 11.6H9.4V17.2Z" fill="#dfd6d2"/></svg>
<svg style="left:683.5px;top:87.0px" width="24" height="24" viewBox="0 0 24 24"><path d="M22.6 10L14.6 2.6V7.2H10.4Q4 7.2 4 13.4Q4 19.6 10.4 19.6H12.4V15.2H10.6Q8.2 15.2 8.2 13.2Q8.2 11.6 10.6 11.6H14.6V17.2Z" fill="#d9dad6"/></svg>
<svg style="left:721.6px;top:91px" width="6" height="22"><rect x="0" y="0.00" width="1.1" height="1.1" fill="#bcbcbc"/><rect x="3.2" y="0.00" width="1.1" height="1.1" fill="#bcbcbc"/><rect x="1" y="1.00" width="1" height="1" fill="#fff"/><rect x="4.2" y="1.00" width="1" height="1" fill="#fff"/><rect x="0" y="3.15" width="1.1" height="1.1" fill="#bcbcbc"/><rect x="3.2" y="3.15" width="1.1" height="1.1" fill="#bcbcbc"/><rect x="1" y="4.15" width="1" height="1" fill="#fff"/><rect x="4.2" y="4.15" width="1" height="1" fill="#fff"/><rect x="0" y="6.30" width="1.1" height="1.1" fill="#bcbcbc"/><rect x="3.2" y="6.30" width="1.1" height="1.1" fill="#bcbcbc"/><rect x="1" y="7.30" width="1" height="1" fill="#fff"/><rect x="4.2" y="7.30" width="1" height="1" fill="#fff"/><rect x="0" y="9.45" width="1.1" height="1.1" fill="#bcbcbc"/><rect x="3.2" y="9.45" width="1.1" height="1.1" fill="#bcbcbc"/><rect x="1" y="10.45" width="1" height="1" fill="#fff"/><rect x="4.2" y="10.45" width="1" height="1" fill="#fff"/><rect x="0" y="12.60" width="1.1" height="1.1" fill="#bcbcbc"/><rect x="3.2" y="12.60" width="1.1" height="1.1" fill="#bcbcbc"/><rect x="1" y="13.60" width="1" height="1" fill="#fff"/><rect x="4.2" y="13.60" width="1" height="1" fill="#fff"/><rect x="0" y="15.75" width="1.1" height="1.1" fill="#bcbcbc"/><rect x="3.2" y="15.75" width="1.1" height="1.1" fill="#bcbcbc"/><rect x="1" y="16.75" width="1" height="1" fill="#fff"/><rect x="4.2" y="16.75" width="1" height="1" fill="#fff"/></svg>
<svg style="left:732.0px;top:87.0px" width="24" height="24" viewBox="0 0 24 24"><g transform="translate(0.6 2.4)"><path d="M5.4 2.6H21V12H5.4L1.2 7.3Z" fill="#e6e5de" stroke="#d6d5ce" stroke-width="0.9" stroke-linejoin="round"/><text x="6.2" y="10" font-family="Liberation Sans, sans-serif" font-size="7.6" font-weight="bold" fill="#c4c4c0">abc</text></g></svg>
<svg style="left:765.0px;top:87.0px" width="24" height="24" viewBox="0 0 24 24"><circle cx="9.4" cy="9" r="7.4" fill="#e3e7e3" stroke="#d6dad6" stroke-width="0.6"/><path d="M9.4 9V1.6A7.4 7.4 0 0 1 16 12.4Z" fill="#eadede"/><path d="M9.4 9L16 12.4A7.4 7.4 0 0 1 5 15Z" fill="#e6e4d8"/><rect x="10.8" y="17" width="3.6" height="5.6" fill="#e4e3da"/><rect x="14.4" y="10.6" width="3.6" height="12" fill="#dfe3df"/><rect x="18" y="17.6" width="3.6" height="5" fill="#e6dcdc"/></svg>
<div style="left:799px;top:90px;width:1px;height:19px;background:#cdcdcd;"></div>
<svg style="left:806.0px;top:87.0px" width="24" height="24" viewBox="0 0 24 24"><path d="M6 2.6H20.6V12.4H6L1.2 7.5Z" fill="#d6e6fa" stroke="#4a82cc" stroke-width="1" stroke-linejoin="round"/><text x="5.8" y="10.4" font-family="Liberation Sans, sans-serif" font-size="8" font-weight="bold" fill="#111">ab</text><path d="M17.2 6.6V15" stroke="#eee" stroke-width="2.2" stroke-linecap="round"/><path d="M17.2 6.6V15" stroke="#888" stroke-width="0.6"/><circle cx="18" cy="18.4" r="4.2" fill="#9c1c1c"/><circle cx="16.8" cy="17" r="1.2" fill="#c65050"/></svg>
<svg style="left:837.5px;top:87.0px" width="24" height="24" viewBox="0 0 24 24"><path d="M6 3.2H21.6V12.8H6L1.4 8Z" fill="#fff" stroke="#e01020" stroke-width="1.1" stroke-linejoin="round"/><rect x="6.6" y="4.6" width="14" height="6.8" fill="#e01020"/><text x="6.6" y="10.6" font-family="Liberation Sans, sans-serif" font-size="7.8" font-weight="bold" fill="#fff">abc</text></svg>
<div style="left:871px;top:90px;width:1px;height:19px;background:#cdcdcd;"></div>
<svg style="left:878.5px;top:87.0px" width="24" height="24" viewBox="0 0 24 24"><g transform="translate(0 1.8)"><path d="M5.4 2.6H21V12H5.4L1.2 7.3Z" fill="#e6e5de" stroke="#d6d5ce" stroke-width="0.9" stroke-linejoin="round"/><text x="6.2" y="10" font-family="Liberation Sans, sans-serif" font-size="7.6" font-weight="bold" fill="#c4c4c0">abc</text></g><path d="M16.6 8V15" stroke="#f0f0f0" stroke-width="2"/><circle cx="17.4" cy="18.6" r="4" fill="#dcd2d2"/></svg>
<svg style="left:912.0px;top:87.0px" width="24" height="24" viewBox="0 0 24 24"><g transform="translate(0 1.8)"><path d="M5.4 2.6H21V12H5.4L1.2 7.3Z" fill="#e6e5de" stroke="#d6d5ce" stroke-width="0.9" stroke-linejoin="round"/><text x="6.2" y="10" font-family="Liberation Sans, sans-serif" font-size="7.6" font-weight="bold" fill="#c4c4c0">abc</text></g><path d="M8.4 19.2Q14.6 13.4 22.4 19.2Q14.6 24.6 8.4 19.2Z" fill="#f4f4f4" stroke="#cfcfcf" stroke-width="0.9"/><circle cx="15.2" cy="19" r="2.4" fill="#d4d4d4"/></svg>
<svg style="left:945.0px;top:87.0px" width="24" height="24" viewBox="0 0 24 24"><g transform="translate(0 1.8)"><path d="M5.4 2.6H21V12H5.4L1.2 7.3Z" fill="#e6e5de" stroke="#d6d5ce" stroke-width="0.9" stroke-linejoin="round"/><text x="6.2" y="10" font-family="Liberation Sans, sans-serif" font-size="7.6" font-weight="bold" fill="#c4c4c0">abc</text></g><rect x="12.8" y="13.2" width="10" height="10" rx="1.6" fill="#d2d2d2"/><path d="M14.6 17H18.6V14.8L22 18.2L18.6 21.6V19.4H14.6Z" fill="#f8f8f8"/></svg>
<svg style="left:978.0px;top:87.0px" width="24" height="24" viewBox="0 0 24 24"><g transform="translate(0 1.8)"><path d="M5.4 2.6H21V12H5.4L1.2 7.3Z" fill="#e6e5de" stroke="#d6d5ce" stroke-width="0.9" stroke-linejoin="round"/><text x="6.2" y="10" font-family="Liberation Sans, sans-serif" font-size="7.6" font-weight="bold" fill="#c4c4c0">abc</text></g><rect x="12.8" y="13.2" width="10" height="10" rx="1.6" fill="#d2d2d2"/><path d="M15.4 19.4A2.8 2.8 0 1 1 18.2 21.4" fill="none" stroke="#f8f8f8" stroke-width="1.5"/><path d="M13.6 18.4L15.6 21L17.4 18.4Z" fill="#f8f8f8"/></svg>
<svg style="left:1011.0px;top:87.0px" width="24" height="24" viewBox="0 0 24 24"><g transform="translate(0 1.8)"><path d="M5.4 2.6H21V12H5.4L1.2 7.3Z" fill="#e6e5de" stroke="#d6d5ce" stroke-width="0.9" stroke-linejoin="round"/><text x="6.2" y="10" font-family="Liberation Sans, sans-serif" font-size="7.6" font-weight="bold" fill="#c4c4c0">abc</text></g><rect x="12.8" y="13.2" width="10" height="10" rx="1.6" fill="#dad8d0"/><path d="M14.6 21.6L15.2 19.4L19.8 14.8L21.4 16.4L16.8 21Z" fill="#f8f8f8"/></svg>
<svg style="left:1047.6px;top:91px" width="6" height="22"><rect x="0" y="0.00" width="1.1" height="1.1" fill="#bcbcbc"/><rect x="3.2" y="0.00" width="1.1" height="1.1" fill="#bcbcbc"/><rect x="1" y="1.00" width="1" height="1" fill="#fff"/><rect x="4.2" y="1.00" width="1" height="1" fill="#fff"/><rect x="0" y="3.15" width="1.1" height="1.1" fill="#bcbcbc"/><rect x="3.2" y="3.15" width="1.1" height="1.1" fill="#bcbcbc"/><rect x="1" y="4.15" width="1" height="1" fill="#fff"/><rect x="4.2" y="4.15" width="1" height="1" fill="#fff"/><rect x="0" y="6.30" width="1.1" height="1.1" fill="#bcbcbc"/><rect x="3.2" y="6.30" width="1.1" height="1.1" fill="#bcbcbc"/><rect x="1" y="7.30" width="1" height="1" fill="#fff"/><rect x="4.2" y="7.30" width="1" height="1" fill="#fff"/><rect x="0" y="9.45" width="1.1" height="1.1" fill="#bcbcbc"/><rect x="3.2" y="9.45" width="1.1" height="1.1" fill="#bcbcbc"/><rect x="1" y="10.45" width="1" height="1" fill="#fff"/><rect x="4.2" y="10.45" width="1" height="1" fill="#fff"/><rect x="0" y="12.60" width="1.1" height="1.1" fill="#bcbcbc"/><rect x="3.2" y="12.60" width="1.1" height="1.1" fill="#bcbcbc"/><rect x="1" y="13.60" width="1" height="1" fill="#fff"/><rect x="4.2" y="13.60" width="1" height="1" fill="#fff"/><rect x="0" y="15.75" width="1.1" height="1.1" fill="#bcbcbc"/><rect x="3.2" y="15.75" width="1.1" height="1.1" fill="#bcbcbc"/><rect x="1" y="16.75" width="1" height="1" fill="#fff"/><rect x="4.2" y="16.75" width="1" height="1" fill="#fff"/></svg>
<svg style="left:1060.0px;top:87.0px" width="24" height="24" viewBox="0 0 24 24"><circle cx="11" cy="10.6" r="10" fill="#6f9bd6" stroke="#3f6cb0" stroke-width="0.8"/><path d="M11 0.6V20.6M1 10.6H21M2.6 5.4H19.4M2.6 15.8H19.4" stroke="#dfe9f6" stroke-width="0.9" fill="none"/><ellipse cx="11" cy="10.6" rx="5" ry="10" fill="none" stroke="#dfe9f6" stroke-width="0.9"/><path d="M3 6L6 4L7.6 8L5 11L2 9.6ZM14.6 4.4L18.4 6L17.4 10L14 9ZM6 13L9 12.4L10 16L7 17.4ZM13 13.4L17.6 12.6L17 16.4L13.6 17Z" fill="#8a8a8a" opacity="0.75"/><rect x="14.4" y="14.4" width="9" height="9" rx="1.4" fill="#4f8f52" stroke="#2f6a34" stroke-width="0.6"/><path d="M18.9 15.8V22M15.8 18.9H22" stroke="#fff" stroke-width="2"/></svg>
<svg style="left:1093.0px;top:87.0px" width="24" height="24" viewBox="0 0 24 24"><circle cx="11" cy="10.6" r="10" fill="#6f9bd6" stroke="#3f6cb0" stroke-width="0.8"/><path d="M11 0.6V20.6M1 10.6H21M2.6 5.4H19.4M2.6 15.8H19.4" stroke="#dfe9f6" stroke-width="0.9" fill="none"/><ellipse cx="11" cy="10.6" rx="5" ry="10" fill="none" stroke="#dfe9f6" stroke-width="0.9"/><path d="M3 6L6 4L7.6 8L5 11L2 9.6ZM14.6 4.4L18.4 6L17.4 10L14 9ZM6 13L9 12.4L10 16L7 17.4ZM13 13.4L17.6 12.6L17 16.4L13.6 17Z" fill="#8a8a8a" opacity="0.75"/><rect x="14.4" y="14.4" width="9" height="9" rx="1.4" fill="#4f8f52" stroke="#2f6a34" stroke-width="0.6"/><circle cx="18.2" cy="18" r="2.1" fill="none" stroke="#fff" stroke-width="1.3"/><path d="M19.8 19.8L22 22" stroke="#fff" stroke-width="1.5"/></svg>
<svg style="left:1126.0px;top:87.0px" width="24" height="24" viewBox="0 0 24 24"><circle cx="12" cy="10.4" r="9.8" fill="#4e78b6" stroke="#234a86" stroke-width="0.9"/><path d="M12 0.6V20M2.2 10.4H21.8M4 5H20M4 15.6H20" stroke="#c9d8ee" stroke-width="0.8" fill="none"/><ellipse cx="12" cy="10.4" rx="4.8" ry="9.8" fill="none" stroke="#c9d8ee" stroke-width="0.8"/><path d="M7 13.2L9.4 12.2L12 14.4L14.6 12.2L17 13.2L21.6 19.6A3.6 3.6 0 1 1 14.6 20.4H9.4A3.6 3.6 0 1 1 2.4 19.6Z" fill="#0c0c0c"/><ellipse cx="6" cy="20.6" rx="2.4" ry="1.7" fill="#fff"/><ellipse cx="18" cy="20.6" rx="2.4" ry="1.7" fill="#fff"/></svg>
<svg style="left:1162.6px;top:91px" width="6" height="22"><rect x="0" y="0.00" width="1.1" height="1.1" fill="#bcbcbc"/><rect x="3.2" y="0.00" width="1.1" height="1.1" fill="#bcbcbc"/><rect x="1" y="1.00" width="1" height="1" fill="#fff"/><rect x="4.2" y="1.00" width="1" height="1" fill="#fff"/><rect x="0" y="3.15" width="1.1" height="1.1" fill="#bcbcbc"/><rect x="3.2" y="3.15" width="1.1" height="1.1" fill="#bcbcbc"/><rect x="1" y="4.15" width="1" height="1" fill="#fff"/><rect x="4.2" y="4.15" width="1" height="1" fill="#fff"/><rect x="0" y="6.30" width="1.1" height="1.1" fill="#bcbcbc"/><rect x="3.2" y="6.30" width="1.1" height="1.1" fill="#bcbcbc"/><rect x="1" y="7.30" width="1" height="1" fill="#fff"/><rect x="4.2" y="7.30" width="1" height="1" fill="#fff"/><rect x="0" y="9.45" width="1.1" height="1.1" fill="#bcbcbc"/><rect x="3.2" y="9.45" width="1.1" height="1.1" fill="#bcbcbc"/><rect x="1" y="10.45" width="1" height="1" fill="#fff"/><rect x="4.2" y="10.45" width="1" height="1" fill="#fff"/><rect x="0" y="12.60" width="1.1" height="1.1" fill="#bcbcbc"/><rect x="3.2" y="12.60" width="1.1" height="1.1" fill="#bcbcbc"/><rect x="1" y="13.60" width="1" height="1" fill="#fff"/><rect x="4.2" y="13.60" width="1" height="1" fill="#fff"/><rect x="0" y="15.75" width="1.1" height="1.1" fill="#bcbcbc"/><rect x="3.2" y="15.75" width="1.1" height="1.1" fill="#bcbcbc"/><rect x="1" y="16.75" width="1" height="1" fill="#fff"/><rect x="4.2" y="16.75" width="1" height="1" fill="#fff"/></svg>
<svg style="left:1175.0px;top:87.0px" width="24" height="24" viewBox="0 0 24 24"><path d="M11.4 1.6Q6.6 1.6 6.6 4.6V7.4H12V8.4H4.4Q1.4 8.4 1.4 12.4Q1.4 16.4 4.4 16.4H6.6V13.6Q6.6 10.6 9.6 10.6H14.4Q16.8 10.6 16.8 8.2V4.6Q16.8 1.6 11.4 1.6Z" fill="#3a76ae"/><circle cx="9" cy="4.4" r="1" fill="#fff"/><path d="M12.4 22.6Q17.2 22.6 17.2 19.6V16.8H11.8V15.8H19.4Q22.4 15.8 22.4 11.8Q22.4 7.8 19.4 7.8H17.2V10.6Q17.2 13.6 14.2 13.6H9.4Q7 13.6 7 16V19.6Q7 22.6 12.4 22.6Z" fill="#f8cf45"/><circle cx="14.8" cy="19.8" r="1" fill="#fff"/><path d="M16.4 17.4L22.6 20.2L16.4 23" fill="none" stroke="#333" stroke-width="1.2"/></svg>
<svg style="left:1208.0px;top:87.0px" width="24" height="24" viewBox="0 0 24 24"><circle cx="12" cy="12" r="10.8" fill="#2fb3c6"/><path d="M2 8A10.8 10.8 0 0 1 22 8Z" fill="#7a78d8"/><path d="M1.4 14.6L6 8.4L9.6 13.4L13 5.6L15.6 12L18.4 4L20.4 6L16.4 20H4Z" fill="#f39a28"/><path d="M4.4 19.6A10.8 10.8 0 0 0 19.6 19.6Z" fill="#2a9fd0"/><path d="M2.4 15.6L6.2 10.4L9.6 15.6L12.8 8L15.6 15L18.6 6.4" fill="none" stroke="#f8c23a" stroke-width="1.4"/><path d="M5.4 3.4V20.6M8.8 1.6V22.4M12 1.2V22.8M15.2 1.6V22.4M18.6 3.4V20.6M1.4 10H22.6M1.4 14H22.6M2.6 18H21.4M2.6 6H21.4" stroke="#e8f4f8" stroke-width="0.35" opacity="0.8"/></svg>
<svg style="left:1255.7px;top:95.8px" width="8" height="6.4"><path d="M0.6 0.3L3.3 3.2L0.6 6.1M4.4 0.3L7.1 3.2L4.4 6.1" fill="none" stroke="#3a3a3a" stroke-width="1.25"/></svg>
<svg style="left:1272.6px;top:91px" width="6" height="22"><rect x="0" y="0.00" width="1.1" height="1.1" fill="#bcbcbc"/><rect x="3.2" y="0.00" width="1.1" height="1.1" fill="#bcbcbc"/><rect x="1" y="1.00" width="1" height="1" fill="#fff"/><rect x="4.2" y="1.00" width="1" height="1" fill="#fff"/><rect x="0" y="3.15" width="1.1" height="1.1" fill="#bcbcbc"/><rect x="3.2" y="3.15" width="1.1" height="1.1" fill="#bcbcbc"/><rect x="1" y="4.15" width="1" height="1" fill="#fff"/><rect x="4.2" y="4.15" width="1" height="1" fill="#fff"/><rect x="0" y="6.30" width="1.1" height="1.1" fill="#bcbcbc"/><rect x="3.2" y="6.30" width="1.1" height="1.1" fill="#bcbcbc"/><rect x="1" y="7.30" width="1" height="1" fill="#fff"/><rect x="4.2" y="7.30" width="1" height="1" fill="#fff"/><rect x="0" y="9.45" width="1.1" height="1.1" fill="#bcbcbc"/><rect x="3.2" y="9.45" width="1.1" height="1.1" fill="#bcbcbc"/><rect x="1" y="10.45" width="1" height="1" fill="#fff"/><rect x="4.2" y="10.45" width="1" height="1" fill="#fff"/><rect x="0" y="12.60" width="1.1" height="1.1" fill="#bcbcbc"/><rect x="3.2" y="12.60" width="1.1" height="1.1" fill="#bcbcbc"/><rect x="1" y="13.60" width="1" height="1" fill="#fff"/><rect x="4.2" y="13.60" width="1" height="1" fill="#fff"/><rect x="0" y="15.75" width="1.1" height="1.1" fill="#bcbcbc"/><rect x="3.2" y="15.75" width="1.1" height="1.1" fill="#bcbcbc"/><rect x="1" y="16.75" width="1" height="1" fill="#fff"/><rect x="4.2" y="16.75" width="1" height="1" fill="#fff"/></svg>
<svg style="left:1285.5px;top:87.0px" width="24" height="24" viewBox="0 0 24 24"><rect x="1.8" y="1" width="19.6" height="20.8" rx="0.8" fill="#6491cc" stroke="#1f3042" stroke-width="1.1"/><rect x="1.8" y="1" width="4.8" height="20.8" fill="#2b3f52"/><text x="10.2" y="16.6" font-family="Liberation Serif, serif" font-size="15.5" fill="#fff">?</text></svg>
<svg style="left:1320.6px;top:91px" width="6" height="22"><rect x="0" y="0.00" width="1.1" height="1.1" fill="#bcbcbc"/><rect x="3.2" y="0.00" width="1.1" height="1.1" fill="#bcbcbc"/><rect x="1" y="1.00" width="1" height="1" fill="#fff"/><rect x="4.2" y="1.00" width="1" height="1" fill="#fff"/><rect x="0" y="3.15" width="1.1" height="1.1" fill="#bcbcbc"/><rect x="3.2" y="3.15" width="1.1" height="1.1" fill="#bcbcbc"/><rect x="1" y="4.15" width="1" height="1" fill="#fff"/><rect x="4.2" y="4.15" width="1" height="1" fill="#fff"/><rect x="0" y="6.30" width="1.1" height="1.1" fill="#bcbcbc"/><rect x="3.2" y="6.30" width="1.1" height="1.1" fill="#bcbcbc"/><rect x="1" y="7.30" width="1" height="1" fill="#fff"/><rect x="4.2" y="7.30" width="1" height="1" fill="#fff"/><rect x="0" y="9.45" width="1.1" height="1.1" fill="#bcbcbc"/><rect x="3.2" y="9.45" width="1.1" height="1.1" fill="#bcbcbc"/><rect x="1" y="10.45" width="1" height="1" fill="#fff"/><rect x="4.2" y="10.45" width="1" height="1" fill="#fff"/><rect x="0" y="12.60" width="1.1" height="1.1" fill="#bcbcbc"/><rect x="3.2" y="12.60" width="1.1" height="1.1" fill="#bcbcbc"/><rect x="1" y="13.60" width="1" height="1" fill="#fff"/><rect x="4.2" y="13.60" width="1" height="1" fill="#fff"/><rect x="0" y="15.75" width="1.1" height="1.1" fill="#bcbcbc"/><rect x="3.2" y="15.75" width="1.1" height="1.1" fill="#bcbcbc"/><rect x="1" y="16.75" width="1" height="1" fill="#fff"/><rect x="4.2" y="16.75" width="1" height="1" fill="#fff"/></svg>
<svg style="left:1333.5px;top:87.0px" width="24" height="24" viewBox="0 0 24 24"><path d="M3.2 2.7L12.1 7.9L21.6 2.7M12.1 7.9L3.4 20.8" fill="none" stroke="#2f5690" stroke-width="1.1"/><path d="M8 6.4Q12 3.6 17 3.4Q21.6 2.4 22.2 5.4Q22.4 8.6 18.6 10Q15.6 10.6 14.6 13.6Q13 17.6 9.6 16.6Q5.4 14.6 5.6 10.4Q6 7.6 8 6.4Z" fill="#5b8ac8" stroke="#2f5690" stroke-width="0.9" opacity="0.95"/><path d="M12.1 7.9L21.6 2.7M12.1 7.9L7 15.4" fill="none" stroke="#2f5690" stroke-width="0.8"/><g fill="#f6dc3a" stroke="#6a6220" stroke-width="0.7"><circle cx="3.2" cy="2.7" r="2.3"/><circle cx="21.6" cy="2.7" r="2.3"/><circle cx="12.1" cy="7.9" r="1.9"/><circle cx="3.4" cy="20.8" r="2.3"/></g><path d="M13.3 17L16.2 21.9L23.3 12.2L16.4 19Z" fill="#f6dc3a" stroke="#4a4418" stroke-width="0.8" stroke-linejoin="round"/></svg>
<svg style="left:5.6px;top:130.5px" width="6" height="22"><rect x="0" y="0.00" width="1.1" height="1.1" fill="#bcbcbc"/><rect x="3.2" y="0.00" width="1.1" height="1.1" fill="#bcbcbc"/><rect x="1" y="1.00" width="1" height="1" fill="#fff"/><rect x="4.2" y="1.00" width="1" height="1" fill="#fff"/><rect x="0" y="3.15" width="1.1" height="1.1" fill="#bcbcbc"/><rect x="3.2" y="3.15" width="1.1" height="1.1" fill="#bcbcbc"/><rect x="1" y="4.15" width="1" height="1" fill="#fff"/><rect x="4.2" y="4.15" width="1" height="1" fill="#fff"/><rect x="0" y="6.30" width="1.1" height="1.1" fill="#bcbcbc"/><rect x="3.2" y="6.30" width="1.1" height="1.1" fill="#bcbcbc"/><rect x="1" y="7.30" width="1" height="1" fill="#fff"/><rect x="4.2" y="7.30" width="1" height="1" fill="#fff"/><rect x="0" y="9.45" width="1.1" height="1.1" fill="#bcbcbc"/><rect x="3.2" y="9.45" width="1.1" height="1.1" fill="#bcbcbc"/><rect x="1" y="10.45" width="1" height="1" fill="#fff"/><rect x="4.2" y="10.45" width="1" height="1" fill="#fff"/><rect x="0" y="12.60" width="1.1" height="1.1" fill="#bcbcbc"/><rect x="3.2" y="12.60" width="1.1" height="1.1" fill="#bcbcbc"/><rect x="1" y="13.60" width="1" height="1" fill="#fff"/><rect x="4.2" y="13.60" width="1" height="1" fill="#fff"/><rect x="0" y="15.75" width="1.1" height="1.1" fill="#bcbcbc"/><rect x="3.2" y="15.75" width="1.1" height="1.1" fill="#bcbcbc"/><rect x="1" y="16.75" width="1" height="1" fill="#fff"/><rect x="4.2" y="16.75" width="1" height="1" fill="#fff"/></svg>
<svg style="left:17.0px;top:125.0px" width="24" height="24" viewBox="0 0 24 24"><defs><linearGradient id="flg1" gradientUnits="userSpaceOnUse" x1="0" y1="1" x2="0" y2="14"><stop offset="0" stop-color="#4f7cc4"/><stop offset="0.5" stop-color="#86aade"/><stop offset="1" stop-color="#cfdff4"/></linearGradient></defs><text x="0.7" y="13.9" font-family="Liberation Sans, sans-serif" font-size="17" font-weight="bold" fill="#3c4458" textLength="24" lengthAdjust="spacingAndGlyphs">FLO</text><text x="0" y="13.8" font-family="Liberation Sans, sans-serif" font-size="17" font-weight="bold" fill="url(#flg1)" stroke="url(#flg1)" stroke-width="0.6" textLength="24" lengthAdjust="spacingAndGlyphs">FLO</text><path d="M0.2 14Q0.6 10.6 3.4 11.4Q5.6 12.4 4 13.6M0.6 15.6Q2.6 13.6 5.4 14.4M15 12.4Q17.4 10.4 19.8 12Q21.8 13.4 23.4 11.8" fill="none" stroke="#1f62b4" stroke-width="1.1"/><path d="M4 12.6L12 9L20 12.2V19L12 24L4 19.6Z" fill="#f1d234" stroke="#333" stroke-width="0.8" stroke-linejoin="round"/><path d="M12 15.6L20 12.2V19L12 24Z" fill="#faf06e" stroke="#333" stroke-width="0.8" stroke-linejoin="round"/><path d="M4 12.6L12 15.6V24L4 19.6Z" fill="#d7b223" stroke="#333" stroke-width="0.8" stroke-linejoin="round"/><path d="M5.6 12.4L12 9.4L18.4 12L12 14.8Z" fill="#5b83c0"/><path d="M8 11.4L11 10.4L12.4 12L10 13ZM13.6 10.8L16 11.6L14.6 13Z" fill="#2f4f86"/></svg>
<svg style="left:50.0px;top:125.0px" width="24" height="24" viewBox="0 0 24 24"><path d="M4.4 13.6A7.8 7.8 0 0 1 11.6 4.6" fill="none" stroke="#9cc3ee" stroke-width="1.1"/><path d="M2.8 12.2L4.4 15L6.4 12.2Z" fill="#9cc3ee"/><path d="M19.8 11.4A7.8 7.8 0 0 1 10.6 20.4" fill="none" stroke="#9cc3ee" stroke-width="1.1"/><path d="M18 12.6L19.8 9.8L21.6 12.6Z" fill="#9cc3ee"/><rect x="16.4" y="1" width="7" height="6.4" fill="#e9a94a"/><rect x="18.6" y="1" width="2.6" height="2.4" fill="#f6cf8c"/><rect x="0.6" y="18.4" width="7" height="6.2" fill="#e9a94a"/><rect x="2.8" y="18.4" width="2.6" height="2.4" fill="#f6cf8c"/><circle cx="11.4" cy="12.6" r="5.8" fill="#1fa17e"/><path d="M11.4 6.8V18.4M5.6 12.6H17.2M6.6 9.4H16.2M6.6 15.8H16.2" stroke="#bfe9dc" stroke-width="0.7"/><ellipse cx="11.4" cy="12.6" rx="2.8" ry="5.8" fill="none" stroke="#bfe9dc" stroke-width="0.7"/><circle cx="15.4" cy="16.6" r="2.6" fill="#4c8df0" stroke="#cfe1fb" stroke-width="0.6"/><path d="M14.2 16.6L15.1 17.6L16.7 15.7" fill="none" stroke="#fff" stroke-width="0.8"/></svg>
<svg style="left:83.0px;top:125.0px" width="24" height="24" viewBox="0 0 24 24"><defs><clipPath id="f3c"><circle cx="12" cy="12.8" r="11.6"/></clipPath></defs><circle cx="12" cy="12.8" r="11.6" fill="#fff"/><g clip-path="url(#f3c)"><path d="M0 9H24M0 15.4H24M0 20.6H24M4.4 0V25M10 0V25M16 0V25M21 0V25" stroke="#4a4a4a" stroke-width="0.85"/><path d="M0 17Q6 16 12 19Q18 22 24 19V25H0Z" fill="#c6d8ee" opacity="0.8"/><path d="M11.6 1Q18 0.6 22 6.4Q18 4.8 15.4 7.4Q13.4 9.6 13 12.6H17.6L17 15H12.6Q12.4 19 14 24.4Q8 23.4 6.4 18Q4.6 10 11.6 1Z" fill="#2a6cb8"/></g><circle cx="12" cy="12.8" r="11.6" fill="none" stroke="#e0e0e0" stroke-width="0.5"/></svg>
<svg style="left:116.0px;top:125.0px" width="24" height="24" viewBox="0 0 24 24"><rect x="1" y="1.6" width="22" height="20.6" fill="#fff" stroke="#6a8fe8" stroke-width="0.9"/><rect x="1" y="1.6" width="22" height="4.6" fill="#7a9cec"/><rect x="1" y="1.6" width="6" height="20.6" fill="#8aa8ee"/><path d="M7 1.6V22.2M12.4 1.6V22.2M17.8 1.6V22.2M1 6.2H23M1 10.2H23M1 14.2H23M1 18.2H23" stroke="#6a8fe8" stroke-width="0.9"/><path d="M2.4 4H5.4M8.6 4H11M14 4H16.4M19.4 4H21.6M2.4 8.2H5.4M2.4 12.2H5.4M2.4 16.2H5.4M2.4 20.2H5.4" stroke="#3f63c8" stroke-width="1.1"/></svg>
<svg style="left:149.0px;top:125.0px" width="24" height="24" viewBox="0 0 24 24"><path d="M1 3.4Q6 0.8 12 1.6Q19 1.2 22.6 3.4Q24 7 22.4 10.4Q20 15 16 16L4.6 22.6Q1.4 22 2 16Q0.4 9 1 3.4Z" fill="#fff" stroke="#111" stroke-width="1.2"/><path d="M5.2 2V21M9.6 1.6V18M14 1.6V14M18.4 1.8V12M1.4 6H23M1.2 10.4H22.4M1.6 14.8H17" stroke="#333" stroke-width="0.8" fill="none"/><circle cx="12.8" cy="17" r="7.7" fill="#6390c8" stroke="#4472ae" stroke-width="0.7"/><circle cx="13.700000000000001" cy="13" r="1.35" fill="#fff"/><path d="M11.200000000000001 15.4H14.5L13.100000000000001 21.2H14.700000000000001L14.4 22.4H10.4L10.700000000000001 21.2H11.8L12.8 16.6H10.9Z" fill="#fff"/></svg>
<svg style="left:182.0px;top:125.0px" width="24" height="24" viewBox="0 0 24 24"><defs><linearGradient id="flg6" gradientUnits="userSpaceOnUse" x1="0" y1="1" x2="0" y2="14"><stop offset="0" stop-color="#4f7cc4"/><stop offset="0.5" stop-color="#86aade"/><stop offset="1" stop-color="#cfdff4"/></linearGradient></defs><text x="0.7" y="13.9" font-family="Liberation Sans, sans-serif" font-size="17" font-weight="bold" fill="#3c4458" textLength="24" lengthAdjust="spacingAndGlyphs">FLO</text><text x="0" y="13.8" font-family="Liberation Sans, sans-serif" font-size="17" font-weight="bold" fill="url(#flg6)" stroke="url(#flg6)" stroke-width="0.6" textLength="24" lengthAdjust="spacingAndGlyphs">FLO</text><path d="M0.2 14Q0.6 10.6 3.4 11.4Q5.6 12.4 4 13.6M0.6 15.6Q2.6 13.6 5.4 14.4M15 12.4Q17.4 10.4 19.8 12Q21.8 13.4 23.4 11.8" fill="none" stroke="#1f62b4" stroke-width="1.1"/><circle cx="12" cy="17" r="7.7" fill="#6390c8" stroke="#4472ae" stroke-width="0.7"/><circle cx="12.9" cy="13" r="1.35" fill="#fff"/><path d="M10.4 15.4H13.7L12.3 21.2H13.9L13.6 22.4H9.6L9.9 21.2H11L12 16.6H10.1Z" fill="#fff"/></svg>
<svg style="left:215.0px;top:125.0px" width="24" height="24" viewBox="0 0 24 24"><path d="M2.4 12.4L6 14L11 11L17 7.4L22.4 4V14.6L2.4 14.6Z" fill="#0a9a0a"/><path d="M2.4 3.4V14.8L6 14.2L12 11L22.6 3.8V14.8" fill="none" stroke="#111" stroke-width="1.1"/><circle cx="12" cy="17" r="7.7" fill="#6390c8" stroke="#4472ae" stroke-width="0.7"/><circle cx="12.9" cy="13" r="1.35" fill="#fff"/><path d="M10.4 15.4H13.7L12.3 21.2H13.9L13.6 22.4H9.6L9.9 21.2H11L12 16.6H10.1Z" fill="#fff"/></svg>
<svg style="left:248.0px;top:125.0px" width="24" height="24" viewBox="0 0 24 24"><path d="M4.5 3.5H15.4L20.5 8.6V22.5H4.5Z" fill="#fff" stroke="#6e6e6e" stroke-width="1"/><path d="M15.4 3.5V8.6H20.5" fill="#eee" stroke="#6e6e6e" stroke-width="0.9"/><path d="M7 7H13.6M7 9.4H13.6M7 11.8H18M7 14.2H11" stroke="#b6b6b6" stroke-width="1"/><rect x="9.4" y="15.4" width="2" height="4" fill="#555"/><path d="M7 19.6H18" stroke="#c8c8c8" stroke-width="0.8"/><circle cx="16" cy="16.4" r="4" fill="#f0f0f0" stroke="#b0b0b0" stroke-width="1.2"/><path d="M19 19.6L23 23.4" stroke="#c99a24" stroke-width="2"/><path d="M21.6 22.2L23.6 24" stroke="#333" stroke-width="1.6"/></svg>
<svg style="left:281.0px;top:125.0px" width="24" height="24" viewBox="0 0 24 24"><defs><linearGradient id="flg9" gradientUnits="userSpaceOnUse" x1="0" y1="1" x2="0" y2="14"><stop offset="0" stop-color="#4f7cc4"/><stop offset="0.5" stop-color="#86aade"/><stop offset="1" stop-color="#cfdff4"/></linearGradient></defs><text x="0.7" y="13.9" font-family="Liberation Sans, sans-serif" font-size="17" font-weight="bold" fill="#3c4458" textLength="24" lengthAdjust="spacingAndGlyphs">FLO</text><text x="0" y="13.8" font-family="Liberation Sans, sans-serif" font-size="17" font-weight="bold" fill="url(#flg9)" stroke="url(#flg9)" stroke-width="0.6" textLength="24" lengthAdjust="spacingAndGlyphs">FLO</text><path d="M0.2 14Q0.6 10.6 3.4 11.4Q5.6 12.4 4 13.6M0.6 15.6Q2.6 13.6 5.4 14.4M15 12.4Q17.4 10.4 19.8 12Q21.8 13.4 23.4 11.8" fill="none" stroke="#1f62b4" stroke-width="1.1"/><rect x="4.6" y="9.4" width="15.6" height="15" rx="0.6" fill="#5b87c4" stroke="#1f3042" stroke-width="0.9"/><rect x="4.6" y="9.4" width="4.4" height="15" fill="#2b3f52"/><text x="11.4" y="21.4" font-family="Liberation Sans, sans-serif" font-size="10.5" fill="#fff">?</text></svg>
<svg style="left:38.0px;top:147.5px" width="5" height="3"><path d="M0 0H5L2.5 3Z" fill="#555"/></svg>
<svg style="left:71.0px;top:147.5px" width="5" height="3"><path d="M0 0H5L2.5 3Z" fill="#555"/></svg>
<svg style="left:104.0px;top:147.5px" width="5" height="3"><path d="M0 0H5L2.5 3Z" fill="#555"/></svg>
<svg style="left:137.0px;top:147.5px" width="5" height="3"><path d="M0 0H5L2.5 3Z" fill="#555"/></svg>
<svg style="left:269.0px;top:147.5px" width="5" height="3"><path d="M0 0H5L2.5 3Z" fill="#555"/></svg>
<span id="t15" class="t" style="left:3px;top:160.5px;font-size:11px;line-height:15px;color:#000;letter-spacing:-0.172px;">Layers</span>
<svg style="left:172px;top:162px" width="11" height="11"><rect x="0.5" y="0.5" width="10" height="10" rx="2" fill="#f7f7f7" stroke="#6c6862"/><rect x="4.6" y="2.6" width="4" height="4" rx="0.8" fill="none" stroke="#5c5852" stroke-width="0.9"/><rect x="2.6" y="4.6" width="4" height="4" rx="0.8" fill="#f7f7f7" stroke="#5c5852" stroke-width="0.9"/></svg>
<svg style="left:186px;top:162px" width="11" height="11"><rect x="0.5" y="0.5" width="10" height="10" rx="2" fill="#f7f7f7" stroke="#6c6862"/><path d="M2.8 2.8L8.2 8.2M8.2 2.8L2.8 8.2" stroke="#56524c" stroke-width="1.7" fill="none"/></svg>
<svg style="left:7.5px;top:184.0px" width="16" height="16" viewBox="0 0 24 24"><path d="M4 4.6L12.4 7.4L10.4 11L2.6 8.4Z" fill="#f8e25a"/><path d="M2.6 8.4L10.4 11L9 14.8L2 12.2Z" fill="#7aa6dc"/><path d="M2 12.2L9 14.8L12 20.4L1.6 15.6Z" fill="#e84848"/><path d="M15.6 10.6L23.2 3.4" stroke="#c8963c" stroke-width="2.6" stroke-linecap="round"/><path d="M8.6 12.4L14.4 8.4L19.6 14.6L13.4 20.4Z" fill="#dcae68" stroke="#b07e34" stroke-width="0.9" stroke-linejoin="round"/><path d="M11 14L16 10.6" stroke="#b07e34" stroke-width="0.7"/></svg>
<svg style="left:33.0px;top:184.0px" width="16" height="16" viewBox="0 0 24 24"><path d="M8.25 3.75H20.25V17.25H8.25Z" fill="none" stroke="#7a7a7a" stroke-width="1.3"/><path d="M5.25 6.75H17.25V20.25H5.25Z" fill="#f0f0f0" stroke="#7a7a7a" stroke-width="1.3"/><path d="M2.25 14.5V21.75H10" fill="none" stroke="#8a8a8a" stroke-width="1.3"/><path d="M11.25 15V2.6Q11.25 0.75 12.75 0.75Q14.25 0.75 14.25 2.6V12.6" fill="none" stroke="#3d62a0" stroke-width="1.2"/><rect x="13.6" y="15" width="8.8" height="8.8" rx="1.6" fill="#4a9050"/><path d="M18 16.8V22M15.4 19.4H20.6" stroke="#fff" stroke-width="2.6" stroke-linecap="round"/></svg>
<svg style="left:58.5px;top:184.0px" width="16" height="16" viewBox="0 0 24 24"><path d="M0.8 11.4Q11 -0.4 23.4 12.6Q11 21.6 0.8 11.4Z" fill="#f2f2f2" stroke="#9a9a9a" stroke-width="1.2"/><path d="M2 8Q10 1 20 6" fill="none" stroke="#b4b4b4" stroke-width="0.9"/><circle cx="11.2" cy="11.4" r="5.4" fill="#5b8fd0" stroke="#4676b8" stroke-width="0.6"/><circle cx="11.6" cy="10.6" r="2.2" fill="#111"/><circle cx="12.6" cy="9.6" r="0.8" fill="#fff"/><path d="M17.6 19.8H26.4L22 24.2Z" fill="#4a4a4a"/></svg>
<svg style="left:84.0px;top:184.0px" width="16" height="16" viewBox="0 0 24 24"><path d="M0.6 2.8Q0.6 1 2.6 1H19.4Q21.4 1 21.4 2.8Q21.4 4.4 20 6L13.4 13.4V23.4L8.4 20.4V13.4L2 6Q0.6 4.4 0.6 2.8Z" fill="#6a9ad4" stroke="#4a7ab8" stroke-width="0.9"/><rect x="2" y="2.4" width="18" height="2.6" rx="0.6" fill="#f8e04a"/><path d="M16.6 19.8H25.5L21 24.2Z" fill="#4a4a4a"/></svg>
<svg style="left:108.0px;top:184.0px" width="16" height="16" viewBox="0 0 24 24"><text x="0.4" y="15" font-family="Liberation Serif, serif" font-size="24" fill="#c8c8c8">ε</text><path d="M11.6 12.4H21.6L18 16.6V22.6H15.2V16.6Z" fill="#ececec" stroke="#dadada" stroke-width="0.8"/></svg>
<svg style="left:145.0px;top:184.0px" width="16" height="16" viewBox="0 0 24 24"><path d="M3 3.6V20.4H10M3 3.6H10M3 12H10" fill="none" stroke="#7a7a7a" stroke-width="1.5"/><rect x="8.4" y="9.8" width="4.4" height="4.4" fill="#f39c3a"/><rect x="8.4" y="18" width="4.4" height="4.4" fill="#f39c3a"/><path d="M13.4 1.4H19.4V12H23L16.4 21L9.8 12H13.4Z" fill="#3f78c0" stroke="#2d5a96" stroke-width="0.8" transform="translate(1.2 0)"/></svg>
<svg style="left:131.0px;top:190.5px" width="6" height="3"><path d="M0 0H6L3.0 3Z" fill="#a8a8a8"/></svg>
<svg style="left:186.7px;top:188.8px" width="8" height="6.4"><path d="M0.6 0.3L3.3 3.2L0.6 6.1M4.4 0.3L7.1 3.2L4.4 6.1" fill="none" stroke="#3a3a3a" stroke-width="1.25"/></svg>
<div style="left:0px;top:208px;width:199px;height:533px;background:#fff;border:1px solid #a0a0a0;border-top-color:#8c8c8c;"></div>
<svg style="left:24px;top:211.1px" width="14" height="14"><rect x="0.7" y="0.6" width="12.6" height="12.6" fill="#fff" stroke="#b4b4b4"/><path d="M3.2 7.2L6.6 11.2L10.8 3.2" stroke="#000" stroke-width="1.9" fill="none"/></svg>
<div style="left:44px;top:210px;width:16px;height:16px;background:#0fae98;border:1px solid #0b8f7d;"></div>
<span id="t16" class="t" style="left:66px;top:212.4px;font-size:11px;line-height:15px;color:#000;display:inline-block;transform-origin:0 50%;transform:scaleX(1.0619);font-weight:bold;">Project Domain TD</span>
<svg style="left:7.3999999999999995px;top:234.1px" width="8" height="4"><path d="M0 0H7.6L3.8 3.9Z" fill="#6a6a6a"/></svg>
<svg style="left:24px;top:229.1px" width="14" height="14"><rect x="0.7" y="0.6" width="12.6" height="12.6" fill="#fff" stroke="#b4b4b4"/><path d="M3.2 7.2L6.6 11.2L10.8 3.2" stroke="#000" stroke-width="1.9" fill="none"/></svg>
<svg style="left:44px;top:228px" width="14" height="16" viewBox="0 0 14 16"><path d="M6.5 2.5H13.5V10.5H6.5Z" fill="#f1f1ed" stroke="#8c8c82" stroke-width="1"/><path d="M3.5 4.5H11.5V11.5H3.5Z" fill="#fafaf8" stroke="#8c8c82" stroke-width="1"/><path d="M1.5 10V14.5H7" fill="none" stroke="#a0a0a0" stroke-width="1"/><path d="M7.5 9.5V2Q7.5 0.5 8.5 0.5Q9.5 0.5 9.5 2V8" fill="none" stroke="#3d62a0" stroke-width="1"/></svg>
<span id="t17" class="t" style="left:65px;top:230.4px;font-size:11px;line-height:15px;color:#000;letter-spacing:-0.379px;">FLO-2D_Tailings Dam</span>
<svg style="left:27.4px;top:252.1px" width="8" height="4"><path d="M0 0H7.6L3.8 3.9Z" fill="#6a6a6a"/></svg>
<svg style="left:44px;top:247.1px" width="14" height="14"><rect x="0.7" y="0.6" width="12.6" height="12.6" fill="#fff" stroke="#b4b4b4"/><path d="M3.2 7.2L6.6 11.2L10.8 3.2" stroke="#000" stroke-width="1.9" fill="none"/></svg>
<svg style="left:64px;top:246px" width="14" height="16" viewBox="0 0 14 16"><path d="M6.5 2.5H13.5V10.5H6.5Z" fill="#f1f1ed" stroke="#8c8c82" stroke-width="1"/><path d="M3.5 4.5H11.5V11.5H3.5Z" fill="#fafaf8" stroke="#8c8c82" stroke-width="1"/><path d="M1.5 10V14.5H7" fill="none" stroke="#a0a0a0" stroke-width="1"/><path d="M7.5 9.5V2Q7.5 0.5 8.5 0.5Q9.5 0.5 9.5 2V8" fill="none" stroke="#3d62a0" stroke-width="1"/></svg>
<span id="t18" class="t" style="left:85px;top:248.4px;font-size:11px;line-height:15px;color:#000;letter-spacing:-0.209px;">User Layers</span>
<svg style="left:64px;top:265.1px" width="14" height="14"><rect x="0.7" y="0.6" width="12.6" height="12.6" fill="#fff" stroke="#b4b4b4"/><path d="M3.2 7.2L6.6 11.2L10.8 3.2" stroke="#000" stroke-width="1.9" fill="none"/></svg>
<div style="left:84px;top:264px;width:16px;height:16px;background:#d4e6f7;border:1px solid #3558b8;"></div>
<div style="left:106px;top:266.4px;width:92px;height:15px;overflow:hidden;"><span class="t" style="position:absolute;left:0;top:0;line-height:15px;display:inline-block;transform-origin:0 50%;transform:scaleX(1.0989);font-weight:bold;">Computational Domain</span></div>
<svg style="left:49.2px;top:286.2px" width="4" height="8"><path d="M0 0V7.6L4 3.8Z" fill="#6a6a6a"/></svg>
<svg style="left:64px;top:283.1px" width="14" height="14"><rect x="0.7" y="0.6" width="12.6" height="12.6" fill="#fff" stroke="#b4b4b4"/><path d="M3.2 7.2L6.6 11.2L10.8 3.2" stroke="#000" stroke-width="1.9" fill="none"/></svg>
<svg style="left:84px;top:282px" width="14" height="16" viewBox="0 0 14 16"><path d="M6.5 2.5H13.5V10.5H6.5Z" fill="#f1f1ed" stroke="#8c8c82" stroke-width="1"/><path d="M3.5 4.5H11.5V11.5H3.5Z" fill="#fafaf8" stroke="#8c8c82" stroke-width="1"/><path d="M1.5 10V14.5H7" fill="none" stroke="#a0a0a0" stroke-width="1"/><path d="M7.5 9.5V2Q7.5 0.5 8.5 0.5Q9.5 0.5 9.5 2V8" fill="none" stroke="#3d62a0" stroke-width="1"/></svg>
<div style="left:105px;top:284.4px;width:93px;height:15px;overflow:hidden;"><span class="t" style="position:absolute;left:0;top:0;line-height:15px;letter-spacing:-0.112px;">Boundary Conditions</span></div>
<svg style="left:49.2px;top:304.2px" width="4" height="8"><path d="M0 0V7.6L4 3.8Z" fill="#6a6a6a"/></svg>
<svg style="left:64px;top:301.1px" width="14" height="14"><rect x="0.7" y="0.6" width="12.6" height="12.6" fill="#fff" stroke="#b4b4b4"/><path d="M3.2 7.2L6.6 11.2L10.8 3.2" stroke="#000" stroke-width="1.9" fill="none"/></svg>
<svg style="left:84px;top:300px" width="14" height="16" viewBox="0 0 14 16"><path d="M6.5 2.5H13.5V10.5H6.5Z" fill="#f1f1ed" stroke="#8c8c82" stroke-width="1"/><path d="M3.5 4.5H11.5V11.5H3.5Z" fill="#fafaf8" stroke="#8c8c82" stroke-width="1"/><path d="M1.5 10V14.5H7" fill="none" stroke="#a0a0a0" stroke-width="1"/><path d="M7.5 9.5V2Q7.5 0.5 8.5 0.5Q9.5 0.5 9.5 2V8" fill="none" stroke="#3d62a0" stroke-width="1"/></svg>
<span id="t21" class="t" style="left:105px;top:302.4px;font-size:11px;line-height:15px;color:#000;letter-spacing:-0.311px;">Channels</span>
<svg style="left:49.2px;top:322.2px" width="4" height="8"><path d="M0 0V7.6L4 3.8Z" fill="#6a6a6a"/></svg>
<svg style="left:64px;top:319.1px" width="14" height="14"><rect x="0.7" y="0.6" width="12.6" height="12.6" fill="#fff" stroke="#b4b4b4"/><path d="M3.2 7.2L6.6 11.2L10.8 3.2" stroke="#000" stroke-width="1.9" fill="none"/></svg>
<svg style="left:84px;top:318px" width="14" height="16" viewBox="0 0 14 16"><path d="M6.5 2.5H13.5V10.5H6.5Z" fill="#f1f1ed" stroke="#8c8c82" stroke-width="1"/><path d="M3.5 4.5H11.5V11.5H3.5Z" fill="#fafaf8" stroke="#8c8c82" stroke-width="1"/><path d="M1.5 10V14.5H7" fill="none" stroke="#a0a0a0" stroke-width="1"/><path d="M7.5 9.5V2Q7.5 0.5 8.5 0.5Q9.5 0.5 9.5 2V8" fill="none" stroke="#3d62a0" stroke-width="1"/></svg>
<span id="t22" class="t" style="left:105px;top:320.4px;font-size:11px;line-height:15px;color:#000;letter-spacing:-0.150px;">Areas</span>
<svg style="left:49.2px;top:340.2px" width="4" height="8"><path d="M0 0V7.6L4 3.8Z" fill="#6a6a6a"/></svg>
<svg style="left:64px;top:337.1px" width="14" height="14"><rect x="0.7" y="0.6" width="12.6" height="12.6" fill="#fff" stroke="#b4b4b4"/><path d="M3.2 7.2L6.6 11.2L10.8 3.2" stroke="#000" stroke-width="1.9" fill="none"/></svg>
<svg style="left:84px;top:336px" width="14" height="16" viewBox="0 0 14 16"><path d="M6.5 2.5H13.5V10.5H6.5Z" fill="#f1f1ed" stroke="#8c8c82" stroke-width="1"/><path d="M3.5 4.5H11.5V11.5H3.5Z" fill="#fafaf8" stroke="#8c8c82" stroke-width="1"/><path d="M1.5 10V14.5H7" fill="none" stroke="#a0a0a0" stroke-width="1"/><path d="M7.5 9.5V2Q7.5 0.5 8.5 0.5Q9.5 0.5 9.5 2V8" fill="none" stroke="#3d62a0" stroke-width="1"/></svg>
<span id="t23" class="t" style="left:105px;top:338.4px;font-size:11px;line-height:15px;color:#000;letter-spacing:-0.244px;">Storm Drain</span>
<svg style="left:49.2px;top:358.2px" width="4" height="8"><path d="M0 0V7.6L4 3.8Z" fill="#6a6a6a"/></svg>
<svg style="left:64px;top:355.1px" width="14" height="14"><rect x="0.7" y="0.6" width="12.6" height="12.6" fill="#fff" stroke="#b4b4b4"/><path d="M3.2 7.2L6.6 11.2L10.8 3.2" stroke="#000" stroke-width="1.9" fill="none"/></svg>
<svg style="left:84px;top:354px" width="14" height="16" viewBox="0 0 14 16"><path d="M6.5 2.5H13.5V10.5H6.5Z" fill="#f1f1ed" stroke="#8c8c82" stroke-width="1"/><path d="M3.5 4.5H11.5V11.5H3.5Z" fill="#fafaf8" stroke="#8c8c82" stroke-width="1"/><path d="M1.5 10V14.5H7" fill="none" stroke="#a0a0a0" stroke-width="1"/><path d="M7.5 9.5V2Q7.5 0.5 8.5 0.5Q9.5 0.5 9.5 2V8" fill="none" stroke="#3d62a0" stroke-width="1"/></svg>
<span id="t24" class="t" style="left:105px;top:356.4px;font-size:11px;line-height:15px;color:#000;letter-spacing:-0.277px;">Floodplain</span>
<svg style="left:49.2px;top:376.2px" width="4" height="8"><path d="M0 0V7.6L4 3.8Z" fill="#6a6a6a"/></svg>
<svg style="left:64px;top:373.1px" width="14" height="14"><rect x="0.7" y="0.6" width="12.6" height="12.6" fill="#fff" stroke="#b4b4b4"/><path d="M3.2 7.2L6.6 11.2L10.8 3.2" stroke="#000" stroke-width="1.9" fill="none"/></svg>
<svg style="left:84px;top:372px" width="14" height="16" viewBox="0 0 14 16"><path d="M6.5 2.5H13.5V10.5H6.5Z" fill="#f1f1ed" stroke="#8c8c82" stroke-width="1"/><path d="M3.5 4.5H11.5V11.5H3.5Z" fill="#fafaf8" stroke="#8c8c82" stroke-width="1"/><path d="M1.5 10V14.5H7" fill="none" stroke="#a0a0a0" stroke-width="1"/><path d="M7.5 9.5V2Q7.5 0.5 8.5 0.5Q9.5 0.5 9.5 2V8" fill="none" stroke="#3d62a0" stroke-width="1"/></svg>
<div style="left:105px;top:374.4px;width:93px;height:15px;overflow:hidden;"><span class="t" style="position:absolute;left:0;top:0;line-height:15px;letter-spacing:0.013px;">Hydraulic Structures</span></div>
<svg style="left:49.2px;top:394.2px" width="4" height="8"><path d="M0 0V7.6L4 3.8Z" fill="#6a6a6a"/></svg>
<svg style="left:64px;top:391.1px" width="14" height="14"><rect x="0.7" y="0.6" width="12.6" height="12.6" fill="#fff" stroke="#b4b4b4"/><path d="M3.2 7.2L6.6 11.2L10.8 3.2" stroke="#000" stroke-width="1.9" fill="none"/></svg>
<svg style="left:84px;top:390px" width="14" height="16" viewBox="0 0 14 16"><path d="M6.5 2.5H13.5V10.5H6.5Z" fill="#f1f1ed" stroke="#8c8c82" stroke-width="1"/><path d="M3.5 4.5H11.5V11.5H3.5Z" fill="#fafaf8" stroke="#8c8c82" stroke-width="1"/><path d="M1.5 10V14.5H7" fill="none" stroke="#a0a0a0" stroke-width="1"/><path d="M7.5 9.5V2Q7.5 0.5 8.5 0.5Q9.5 0.5 9.5 2V8" fill="none" stroke="#3d62a0" stroke-width="1"/></svg>
<span id="t26" class="t" style="left:105px;top:392.4px;font-size:11px;line-height:15px;color:#000;letter-spacing:-0.247px;">Levees</span>
<svg style="left:49.2px;top:412.2px" width="4" height="8"><path d="M0 0V7.6L4 3.8Z" fill="#6a6a6a"/></svg>
<svg style="left:64px;top:409.1px" width="14" height="14"><rect x="0.7" y="0.6" width="12.6" height="12.6" fill="#fff" stroke="#b4b4b4"/><path d="M3.2 7.2L6.6 11.2L10.8 3.2" stroke="#000" stroke-width="1.9" fill="none"/></svg>
<svg style="left:84px;top:408px" width="14" height="16" viewBox="0 0 14 16"><path d="M6.5 2.5H13.5V10.5H6.5Z" fill="#f1f1ed" stroke="#8c8c82" stroke-width="1"/><path d="M3.5 4.5H11.5V11.5H3.5Z" fill="#fafaf8" stroke="#8c8c82" stroke-width="1"/><path d="M1.5 10V14.5H7" fill="none" stroke="#a0a0a0" stroke-width="1"/><path d="M7.5 9.5V2Q7.5 0.5 8.5 0.5Q9.5 0.5 9.5 2V8" fill="none" stroke="#3d62a0" stroke-width="1"/></svg>
<span id="t27" class="t" style="left:105px;top:410.4px;font-size:11px;line-height:15px;color:#000;letter-spacing:-0.127px;">Elevations</span>
<svg style="left:49.2px;top:430.2px" width="4" height="8"><path d="M0 0V7.6L4 3.8Z" fill="#6a6a6a"/></svg>
<svg style="left:64px;top:427.1px" width="14" height="14"><rect x="0.7" y="0.6" width="12.6" height="12.6" fill="#fff" stroke="#b4b4b4"/><path d="M3.2 7.2L6.6 11.2L10.8 3.2" stroke="#000" stroke-width="1.9" fill="none"/></svg>
<svg style="left:84px;top:426px" width="14" height="16" viewBox="0 0 14 16"><path d="M6.5 2.5H13.5V10.5H6.5Z" fill="#f1f1ed" stroke="#8c8c82" stroke-width="1"/><path d="M3.5 4.5H11.5V11.5H3.5Z" fill="#fafaf8" stroke="#8c8c82" stroke-width="1"/><path d="M1.5 10V14.5H7" fill="none" stroke="#a0a0a0" stroke-width="1"/><path d="M7.5 9.5V2Q7.5 0.5 8.5 0.5Q9.5 0.5 9.5 2V8" fill="none" stroke="#3d62a0" stroke-width="1"/></svg>
<span id="t28" class="t" style="left:105px;top:428.4px;font-size:11px;line-height:15px;color:#000;letter-spacing:0.191px;">Infiltration</span>
<svg style="left:27.4px;top:450.1px" width="8" height="4"><path d="M0 0H7.6L3.8 3.9Z" fill="#6a6a6a"/></svg>
<svg style="left:44px;top:445.1px" width="14" height="14"><rect x="0.7" y="0.6" width="12.6" height="12.6" fill="#fff" stroke="#b4b4b4"/><path d="M3.2 7.2L6.6 11.2L10.8 3.2" stroke="#000" stroke-width="1.9" fill="none"/></svg>
<svg style="left:64px;top:444px" width="14" height="16" viewBox="0 0 14 16"><path d="M6.5 2.5H13.5V10.5H6.5Z" fill="#f1f1ed" stroke="#8c8c82" stroke-width="1"/><path d="M3.5 4.5H11.5V11.5H3.5Z" fill="#fafaf8" stroke="#8c8c82" stroke-width="1"/><path d="M1.5 10V14.5H7" fill="none" stroke="#a0a0a0" stroke-width="1"/><path d="M7.5 9.5V2Q7.5 0.5 8.5 0.5Q9.5 0.5 9.5 2V8" fill="none" stroke="#3d62a0" stroke-width="1"/></svg>
<span id="t29" class="t" style="left:85px;top:446.4px;font-size:11px;line-height:15px;color:#000;letter-spacing:-0.277px;">Schematic Layers</span>
<svg style="left:64px;top:463.1px" width="14" height="14"><rect x="0.7" y="0.6" width="12.6" height="12.6" fill="#fff" stroke="#b4b4b4"/><path d="M3.2 7.2L6.6 11.2L10.8 3.2" stroke="#000" stroke-width="1.9" fill="none"/></svg>
<div style="left:84px;top:462px;width:16px;height:16px;background:#fff;border:1px solid #d0d0d0;"></div>
<span id="t30" class="t" style="left:106px;top:464.4px;font-size:11px;line-height:15px;color:#000;display:inline-block;transform-origin:0 50%;transform:scaleX(1.0166);font-weight:bold;">Grid</span>
<svg style="left:49.2px;top:484.2px" width="4" height="8"><path d="M0 0V7.6L4 3.8Z" fill="#6a6a6a"/></svg>
<svg style="left:64px;top:481.1px" width="14" height="14"><rect x="0.7" y="0.6" width="12.6" height="12.6" fill="#fff" stroke="#b4b4b4"/><path d="M3.2 7.2L6.6 11.2L10.8 3.2" stroke="#000" stroke-width="1.9" fill="none"/></svg>
<svg style="left:84px;top:480px" width="14" height="16" viewBox="0 0 14 16"><path d="M6.5 2.5H13.5V10.5H6.5Z" fill="#f1f1ed" stroke="#8c8c82" stroke-width="1"/><path d="M3.5 4.5H11.5V11.5H3.5Z" fill="#fafaf8" stroke="#8c8c82" stroke-width="1"/><path d="M1.5 10V14.5H7" fill="none" stroke="#a0a0a0" stroke-width="1"/><path d="M7.5 9.5V2Q7.5 0.5 8.5 0.5Q9.5 0.5 9.5 2V8" fill="none" stroke="#3d62a0" stroke-width="1"/></svg>
<span id="t31" class="t" style="left:105px;top:482.4px;font-size:11px;line-height:15px;color:#000;letter-spacing:-0.311px;">Channels</span>
<svg style="left:49.2px;top:502.2px" width="4" height="8"><path d="M0 0V7.6L4 3.8Z" fill="#6a6a6a"/></svg>
<svg style="left:64px;top:499.1px" width="14" height="14"><rect x="0.7" y="0.6" width="12.6" height="12.6" fill="#fff" stroke="#b4b4b4"/><path d="M3.2 7.2L6.6 11.2L10.8 3.2" stroke="#000" stroke-width="1.9" fill="none"/></svg>
<svg style="left:84px;top:498px" width="14" height="16" viewBox="0 0 14 16"><path d="M6.5 2.5H13.5V10.5H6.5Z" fill="#f1f1ed" stroke="#8c8c82" stroke-width="1"/><path d="M3.5 4.5H11.5V11.5H3.5Z" fill="#fafaf8" stroke="#8c8c82" stroke-width="1"/><path d="M1.5 10V14.5H7" fill="none" stroke="#a0a0a0" stroke-width="1"/><path d="M7.5 9.5V2Q7.5 0.5 8.5 0.5Q9.5 0.5 9.5 2V8" fill="none" stroke="#3d62a0" stroke-width="1"/></svg>
<span id="t32" class="t" style="left:105px;top:500.4px;font-size:11px;line-height:15px;color:#000;letter-spacing:-0.277px;">Floodplain</span>
<svg style="left:49.2px;top:520.2px" width="4" height="8"><path d="M0 0V7.6L4 3.8Z" fill="#6a6a6a"/></svg>
<svg style="left:64px;top:517.1px" width="14" height="14"><rect x="0.7" y="0.6" width="12.6" height="12.6" fill="#fff" stroke="#b4b4b4"/><path d="M3.2 7.2L6.6 11.2L10.8 3.2" stroke="#000" stroke-width="1.9" fill="none"/></svg>
<svg style="left:84px;top:516px" width="14" height="16" viewBox="0 0 14 16"><path d="M6.5 2.5H13.5V10.5H6.5Z" fill="#f1f1ed" stroke="#8c8c82" stroke-width="1"/><path d="M3.5 4.5H11.5V11.5H3.5Z" fill="#fafaf8" stroke="#8c8c82" stroke-width="1"/><path d="M1.5 10V14.5H7" fill="none" stroke="#a0a0a0" stroke-width="1"/><path d="M7.5 9.5V2Q7.5 0.5 8.5 0.5Q9.5 0.5 9.5 2V8" fill="none" stroke="#3d62a0" stroke-width="1"/></svg>
<span id="t33" class="t" style="left:105px;top:518.4px;font-size:11px;line-height:15px;color:#000;letter-spacing:-0.247px;">Levees</span>
<svg style="left:49.2px;top:538.2px" width="4" height="8"><path d="M0 0V7.6L4 3.8Z" fill="#6a6a6a"/></svg>
<svg style="left:64px;top:535.1px" width="14" height="14"><rect x="0.7" y="0.6" width="12.6" height="12.6" fill="#fff" stroke="#b4b4b4"/><path d="M3.2 7.2L6.6 11.2L10.8 3.2" stroke="#000" stroke-width="1.9" fill="none"/></svg>
<svg style="left:84px;top:534px" width="14" height="16" viewBox="0 0 14 16"><path d="M6.5 2.5H13.5V10.5H6.5Z" fill="#f1f1ed" stroke="#8c8c82" stroke-width="1"/><path d="M3.5 4.5H11.5V11.5H3.5Z" fill="#fafaf8" stroke="#8c8c82" stroke-width="1"/><path d="M1.5 10V14.5H7" fill="none" stroke="#a0a0a0" stroke-width="1"/><path d="M7.5 9.5V2Q7.5 0.5 8.5 0.5Q9.5 0.5 9.5 2V8" fill="none" stroke="#3d62a0" stroke-width="1"/></svg>
<div style="left:105px;top:536.4px;width:93px;height:15px;overflow:hidden;"><span class="t" style="position:absolute;left:0;top:0;line-height:15px;letter-spacing:0.013px;">Hydraulic Structures</span></div>
<svg style="left:49.2px;top:556.2px" width="4" height="8"><path d="M0 0V7.6L4 3.8Z" fill="#6a6a6a"/></svg>
<svg style="left:64px;top:553.1px" width="14" height="14"><rect x="0.7" y="0.6" width="12.6" height="12.6" fill="#fff" stroke="#b4b4b4"/><path d="M3.2 7.2L6.6 11.2L10.8 3.2" stroke="#000" stroke-width="1.9" fill="none"/></svg>
<svg style="left:84px;top:552px" width="14" height="16" viewBox="0 0 14 16"><path d="M6.5 2.5H13.5V10.5H6.5Z" fill="#f1f1ed" stroke="#8c8c82" stroke-width="1"/><path d="M3.5 4.5H11.5V11.5H3.5Z" fill="#fafaf8" stroke="#8c8c82" stroke-width="1"/><path d="M1.5 10V14.5H7" fill="none" stroke="#a0a0a0" stroke-width="1"/><path d="M7.5 9.5V2Q7.5 0.5 8.5 0.5Q9.5 0.5 9.5 2V8" fill="none" stroke="#3d62a0" stroke-width="1"/></svg>
<div style="left:105px;top:554.4px;width:93px;height:15px;overflow:hidden;"><span class="t" style="position:absolute;left:0;top:0;line-height:15px;letter-spacing:-0.112px;">Boundary Conditions</span></div>
<svg style="left:49.2px;top:574.2px" width="4" height="8"><path d="M0 0V7.6L4 3.8Z" fill="#6a6a6a"/></svg>
<svg style="left:64px;top:571.1px" width="14" height="14"><rect x="0.7" y="0.6" width="12.6" height="12.6" fill="#fff" stroke="#b4b4b4"/><path d="M3.2 7.2L6.6 11.2L10.8 3.2" stroke="#000" stroke-width="1.9" fill="none"/></svg>
<svg style="left:84px;top:570px" width="14" height="16" viewBox="0 0 14 16"><path d="M6.5 2.5H13.5V10.5H6.5Z" fill="#f1f1ed" stroke="#8c8c82" stroke-width="1"/><path d="M3.5 4.5H11.5V11.5H3.5Z" fill="#fafaf8" stroke="#8c8c82" stroke-width="1"/><path d="M1.5 10V14.5H7" fill="none" stroke="#a0a0a0" stroke-width="1"/><path d="M7.5 9.5V2Q7.5 0.5 8.5 0.5Q9.5 0.5 9.5 2V8" fill="none" stroke="#3d62a0" stroke-width="1"/></svg>
<span id="t36" class="t" style="left:105px;top:572.4px;font-size:11px;line-height:15px;color:#000;letter-spacing:-0.150px;">Areas</span>
<svg style="left:49.2px;top:592.2px" width="4" height="8"><path d="M0 0V7.6L4 3.8Z" fill="#6a6a6a"/></svg>
<svg style="left:64px;top:589.1px" width="14" height="14"><rect x="0.7" y="0.6" width="12.6" height="12.6" fill="#fff" stroke="#b4b4b4"/><path d="M3.2 7.2L6.6 11.2L10.8 3.2" stroke="#000" stroke-width="1.9" fill="none"/></svg>
<svg style="left:84px;top:588px" width="14" height="16" viewBox="0 0 14 16"><path d="M6.5 2.5H13.5V10.5H6.5Z" fill="#f1f1ed" stroke="#8c8c82" stroke-width="1"/><path d="M3.5 4.5H11.5V11.5H3.5Z" fill="#fafaf8" stroke="#8c8c82" stroke-width="1"/><path d="M1.5 10V14.5H7" fill="none" stroke="#a0a0a0" stroke-width="1"/><path d="M7.5 9.5V2Q7.5 0.5 8.5 0.5Q9.5 0.5 9.5 2V8" fill="none" stroke="#3d62a0" stroke-width="1"/></svg>
<span id="t37" class="t" style="left:105px;top:590.4px;font-size:11px;line-height:15px;color:#000;letter-spacing:-0.244px;">Storm Drain</span>
<div style="left:1px;top:725px;width:197px;height:15px;background:#d2d2d2;border-top:1px solid #b0b0b0;"></div>
<div style="left:0px;top:725px;width:15px;height:15px;background:linear-gradient(#fff,#ececec);border:1px solid #b0b0b0;"></div>
<div style="left:184px;top:725px;width:15px;height:15px;background:linear-gradient(#fff,#ececec);border:1px solid #b0b0b0;"></div>
<div style="left:14px;top:725px;width:142px;height:15px;background:linear-gradient(#fdfdfd,#ececec);border:1px solid #b0b0b0;"></div>
<svg style="left:5px;top:728.5px" width="5" height="8"><path d="M5 0V8L0.5 4Z" fill="#444"/></svg>
<svg style="left:188.5px;top:728.5px" width="5" height="8"><path d="M0 0V8L4.5 4Z" fill="#444"/></svg>
<span id="t38" class="t" style="left:208px;top:160.5px;font-size:11px;line-height:15px;color:#000;letter-spacing:-0.210px;">FLO-2D Grid Info</span>
<svg style="left:861px;top:162px" width="11" height="11"><rect x="0.5" y="0.5" width="10" height="10" rx="2" fill="#f7f7f7" stroke="#6c6862"/><rect x="4.6" y="2.6" width="4" height="4" rx="0.8" fill="none" stroke="#5c5852" stroke-width="0.9"/><rect x="2.6" y="4.6" width="4" height="4" rx="0.8" fill="#f7f7f7" stroke="#5c5852" stroke-width="0.9"/></svg>
<svg style="left:875px;top:162px" width="11" height="11"><rect x="0.5" y="0.5" width="10" height="10" rx="2" fill="#f7f7f7" stroke="#6c6862"/><path d="M2.8 2.8L8.2 8.2M8.2 2.8L2.8 8.2" stroke="#56524c" stroke-width="1.7" fill="none"/></svg>
<span id="t39" class="t" style="left:210.7px;top:188.5px;font-size:11px;line-height:15px;color:#000;letter-spacing:-0.200px;">ID</span>
<div style="left:228px;top:184px;width:70px;height:22px;background:#fff;border:1px solid #ababab;border-radius:3px;"></div>
<div style="left:304px;top:183px;width:28px;height:24px;background:linear-gradient(#fdfdfd,#ededed);border:1px solid #a8a8a8;border-radius:3px;"></div>
<svg style="left:310.6px;top:190.4px" width="14.8" height="9.2" viewBox="0 0 14.8 9.2"><path d="M0.9 4.6Q7.4 -2.6 13.9 4.6Q7.4 11.8 0.9 4.6Z" fill="#fff" stroke="#111" stroke-width="1.6"/><circle cx="7.4" cy="4.6" r="2.9" fill="#111"/><circle cx="7.4" cy="4.6" r="1.1" fill="#fff"/></svg>
<span id="t40" class="t" style="left:337.5px;top:188.5px;font-size:11px;line-height:15px;color:#000;letter-spacing:-0.427px;">Elev</span>
<div style="left:364px;top:184px;width:70px;height:22px;background:#fff;border:1px solid #ababab;border-radius:3px;"></div>
<span id="t41" class="t" style="left:439.4px;top:188.5px;font-size:11px;line-height:15px;color:#000;letter-spacing:-0.625px;">n</span>
<div style="left:452px;top:184px;width:70px;height:22px;background:#fff;border:1px solid #ababab;border-radius:3px;"></div>
<span id="t42" class="t" style="left:528px;top:188.5px;font-size:11px;line-height:15px;color:#000;letter-spacing:-0.453px;">Cell size</span>
<div style="left:572px;top:184px;width:50px;height:22px;background:#fff;border:1px solid #ababab;border-radius:3px;"></div>
<span id="t43" class="t" style="left:627.5px;top:188.5px;font-size:11px;line-height:15px;color:#000;letter-spacing:-0.148px;">Number of cells: 0</span>
<div style="left:729px;top:187px;width:14px;height:14px;background:#fff;border:1px solid #b0b0b0;border-radius:1px;"></div>
<span id="t44" class="t" style="left:747.4px;top:188.0px;font-size:11px;line-height:15px;color:#000;letter-spacing:-0.151px;">Plot rain</span>
<div style="left:799px;top:187px;width:14px;height:14px;background:#fff;border:1px solid #b0b0b0;border-radius:1px;"></div>
<span id="t45" class="t" style="left:817.6px;top:188.0px;font-size:11px;line-height:15px;color:#000;letter-spacing:-0.166px;">Render elev</span>
<div style="left:205px;top:219px;width:683px;height:359px;background:#fff;border:1px solid #a6a6a6;border-top-color:#8c8c8c;"></div>
<svg style="left:0;top:0" width="1366" height="768"><polygon points="440.8,256.2 449.2,256.7 451.3,258.3 459.6,255.8 470,256.2 475.2,259.8 478.3,263.3 483.5,265 487,267 491.9,266 495,267.5 499.2,267.7 501.7,265.6 508.5,264.6 526.2,265.4 529.4,262.9 548.7,263.7 557.5,259.8 562.5,258.3 570.8,254.6 577,254.6 578,256.2 585.4,255.8 592.7,258.3 594.8,257 603,257.9 606,257 611.5,256.2 616.7,259.2 621.9,260.8 628,260.8 630.2,261.9 635,261.9 637.5,259.2 642.7,257 652,256.2 661.5,255.6 666.7,255.6 666.7,267 669.8,269.2 671.9,274.4 676,277 683.3,279.2 682.3,281.7 684.4,290 687.5,297.3 692,303.5 692.3,310.8 691.7,320.2 699,329.6 706.2,331.7 708.3,335.8 709.4,347.3 706.2,355.6 703,361.9 698.3,366 695.8,373.3 691.7,378.5 690.6,385.8 689.2,390 691.2,396.2 690.6,410.8 692.7,416 696.5,418 688,425.4 687.5,429.2 682.3,430 679.6,436.9 674.6,436.9 674,435.8 663.5,435.4 659.4,437.9 656.2,436.9 647.5,441.7 642.7,448.3 641.7,452.5 637.5,457 627,456.7 623.3,455.6 619.2,459.8 620.4,466 617.7,475.4 617,477 610.4,479.6 604.6,480.6 597.9,485.8 591.7,492 587.5,492 584.4,490 582.9,482.7 581.2,480.6 577,480.6 569.8,483.7 562.5,483.3 561.2,481.7 555.4,486.2 551.2,487.9 545,486.2 543.3,482.7 540.8,482.7 537.7,486.2 536.2,492 532.5,495.2 528.3,495.2 516.9,492 513.7,489.6 510,492 506.5,502.5 505.4,506.7 499.2,510.8 496,515 494.6,525.4 492.5,529.2 480.4,529.2 470,528.5 466.2,533.7 460.6,535.8 451.2,541.7 445.4,542 439.8,538.3 427.3,537.5 423.7,537.9 420.4,533.7 419,527.9 413.3,530 408.5,532.7 407,538.3 404.4,539.6 399.2,535.8 397.5,532.7 399.2,526.5 393,520.2 390.8,515 391.5,509.8 384.6,506.2 383.5,499.4 386.2,493 387.7,481.7 387.7,473.3 391.9,468.7 397,467.5 399.2,463 410,463.3 413.7,456.2 416.9,452.5 415.8,444.6 417.9,433.7 418.3,426.5 420.6,414.6 418.3,409.8 414.2,402 415.8,395 414.8,388 403.3,374.4 397,372.9 395.4,369.2 398.1,364.6 402.7,362.9 403.3,355.6 405.8,350.4 411.7,347.3 415.8,344.2 418.3,337.9 421,334.8 429,331.7 430.4,326.5 430.4,320.2 429,310.8 430,302.9 434.6,300 432.1,297.3 433.5,290 434.2,281.7 435.6,264.6 439.2,259.8" fill="#0fae98" stroke="#232323" stroke-width="1" stroke-linejoin="round"/></svg>
<svg style="left:540px;top:580px" width="14" height="2"><g fill="#b0b0b0"><rect x="0" width="1" height="1"/><rect x="3" width="1" height="1"/><rect x="6" width="1" height="1"/><rect x="9" width="1" height="1"/><rect x="12" width="1" height="1"/></g></svg>
<svg style="left:201px;top:447px" width="2" height="14"><g fill="#b0b0b0"><rect y="0" width="1" height="1"/><rect y="3" width="1" height="1"/><rect y="6" width="1" height="1"/><rect y="9" width="1" height="1"/><rect y="12" width="1" height="1"/></g></svg>
<svg style="left:891px;top:447px" width="2" height="14"><g fill="#b0b0b0"><rect y="0" width="1" height="1"/><rect y="3" width="1" height="1"/><rect y="6" width="1" height="1"/><rect y="9" width="1" height="1"/><rect y="12" width="1" height="1"/></g></svg>
<svg style="left:632px;top:657px" width="2" height="14"><g fill="#b0b0b0"><rect y="0" width="1" height="1"/><rect y="3" width="1" height="1"/><rect y="6" width="1" height="1"/><rect y="9" width="1" height="1"/><rect y="12" width="1" height="1"/></g></svg>
<span id="t46" class="t" style="left:208px;top:586.5px;font-size:11px;line-height:15px;color:#000;letter-spacing:-0.215px;">FLO-2D Table Editor</span>
<svg style="left:601px;top:588px" width="11" height="11"><rect x="0.5" y="0.5" width="10" height="10" rx="2" fill="#f7f7f7" stroke="#6c6862"/><rect x="4.6" y="2.6" width="4" height="4" rx="0.8" fill="none" stroke="#5c5852" stroke-width="0.9"/><rect x="2.6" y="4.6" width="4" height="4" rx="0.8" fill="#f7f7f7" stroke="#5c5852" stroke-width="0.9"/></svg>
<svg style="left:615px;top:588px" width="11" height="11"><rect x="0.5" y="0.5" width="10" height="10" rx="2" fill="#f7f7f7" stroke="#6c6862"/><path d="M2.8 2.8L8.2 8.2M8.2 2.8L2.8 8.2" stroke="#56524c" stroke-width="1.7" fill="none"/></svg>
<div style="left:211px;top:609px;width:60px;height:20px;background:linear-gradient(#fefefe,#eeeeee);border:1px solid #a8a8a8;border-radius:3px;"></div>
<span id="t47" class="t" style="left:227.85px;top:613.0px;font-size:11px;line-height:15px;color:#000;letter-spacing:-0.297px;">Copy</span>
<div style="left:211px;top:635px;width:60px;height:20px;background:linear-gradient(#fefefe,#eeeeee);border:1px solid #a8a8a8;border-radius:3px;"></div>
<span id="t48" class="t" style="left:226.35px;top:639.0px;font-size:11px;line-height:15px;color:#000;letter-spacing:-0.128px;">Paste</span>
<div style="left:211px;top:662px;width:60px;height:20px;background:linear-gradient(#fefefe,#eeeeee);border:1px solid #a8a8a8;border-radius:3px;"></div>
<span id="t49" class="t" style="left:224.35px;top:666.0px;font-size:11px;line-height:15px;color:#000;letter-spacing:-0.049px;">Delete</span>
<div style="left:211px;top:688px;width:60px;height:20px;background:linear-gradient(#fefefe,#eeeeee);border:1px solid #a8a8a8;border-radius:3px;"></div>
<span id="t50" class="t" style="left:227.6px;top:692.0px;font-size:11px;line-height:15px;color:#000;letter-spacing:-0.324px;">Undo</span>
<div style="left:211px;top:714px;width:60px;height:20px;background:linear-gradient(#fefefe,#eeeeee);border:1px solid #a8a8a8;border-radius:3px;"></div>
<span id="t51" class="t" style="left:227.6px;top:718.0px;font-size:11px;line-height:15px;color:#000;letter-spacing:-0.324px;">Redo</span>
<div style="left:277px;top:609px;width:346px;height:125px;background:#fff;border:1px solid #a6a6a6;border-top-color:#8c8c8c;"></div>
<span id="t52" class="t" style="left:638px;top:586.5px;font-size:11px;line-height:15px;color:#000;letter-spacing:-0.331px;">FLO-2D Plot</span>
<svg style="left:861px;top:588px" width="11" height="11"><rect x="0.5" y="0.5" width="10" height="10" rx="2" fill="#f7f7f7" stroke="#6c6862"/><rect x="4.6" y="2.6" width="4" height="4" rx="0.8" fill="none" stroke="#5c5852" stroke-width="0.9"/><rect x="2.6" y="4.6" width="4" height="4" rx="0.8" fill="#f7f7f7" stroke="#5c5852" stroke-width="0.9"/></svg>
<svg style="left:875px;top:588px" width="11" height="11"><rect x="0.5" y="0.5" width="10" height="10" rx="2" fill="#f7f7f7" stroke="#6c6862"/><path d="M2.8 2.8L8.2 8.2M8.2 2.8L2.8 8.2" stroke="#56524c" stroke-width="1.7" fill="none"/></svg>
<div style="left:644px;top:612px;width:235.5px;height:92px;background:#fff;"></div>
<svg style="left:644px;top:612px;overflow:hidden" width="235.5" height="92" shape-rendering="crispEdges" stroke-width="1"><path d="M23.5 0V72" stroke="#f0f0f0"/><path d="M33.5 0V72" stroke="#f0f0f0"/><path d="M42.5 0V72" stroke="#f0f0f0"/><path d="M52.5 0V72" stroke="#f0f0f0"/><path d="M61.5 0V72" stroke="#f0f0f0"/><path d="M71.5 0V72" stroke="#f0f0f0"/><path d="M80.5 0V72" stroke="#f0f0f0"/><path d="M90.5 0V72" stroke="#f0f0f0"/><path d="M99.5 0V72" stroke="#f0f0f0"/><path d="M108.5 0V72" stroke="#f0f0f0"/><path d="M118.5 0V72" stroke="#f0f0f0"/><path d="M127.5 0V72" stroke="#f0f0f0"/><path d="M137.5 0V72" stroke="#f0f0f0"/><path d="M146.5 0V72" stroke="#f0f0f0"/><path d="M156.5 0V72" stroke="#f0f0f0"/><path d="M165.5 0V72" stroke="#f0f0f0"/><path d="M175.5 0V72" stroke="#f0f0f0"/><path d="M184.5 0V72" stroke="#f0f0f0"/><path d="M194.5 0V72" stroke="#f0f0f0"/><path d="M203.5 0V72" stroke="#f0f0f0"/><path d="M212.5 0V72" stroke="#f0f0f0"/><path d="M222.5 0V72" stroke="#f0f0f0"/><path d="M231.5 0V72" stroke="#f0f0f0"/><path d="M22 3.5H235.5" stroke="#f3f3f3"/><path d="M22 9.5H235.5" stroke="#f3f3f3"/><path d="M22 15.5H235.5" stroke="#f3f3f3"/><path d="M22 21.5H235.5" stroke="#f3f3f3"/><path d="M22 27.5H235.5" stroke="#f3f3f3"/><path d="M22 33.5H235.5" stroke="#f3f3f3"/><path d="M22 39.5H235.5" stroke="#f3f3f3"/><path d="M22 45.5H235.5" stroke="#f3f3f3"/><path d="M22 51.5H235.5" stroke="#f3f3f3"/><path d="M22 57.5H235.5" stroke="#f3f3f3"/><path d="M22 63.5H235.5" stroke="#f3f3f3"/><path d="M22 69.5H235.5" stroke="#f3f3f3"/><path d="M33.5 0V72" stroke="#d4d4d4"/><path d="M52.5 0V72" stroke="#d4d4d4"/><path d="M71.5 0V72" stroke="#d4d4d4"/><path d="M90.5 0V72" stroke="#d4d4d4"/><path d="M109.5 0V72" stroke="#d4d4d4"/><path d="M127.5 0V72" stroke="#d4d4d4"/><path d="M146.5 0V72" stroke="#d4d4d4"/><path d="M165.5 0V72" stroke="#d4d4d4"/><path d="M184.5 0V72" stroke="#d4d4d4"/><path d="M203.5 0V72" stroke="#d4d4d4"/><path d="M222.5 0V72" stroke="#d4d4d4"/><path d="M22 0.5H235.5" stroke="#e4e4e4"/><path d="M22 6.5H235.5" stroke="#e4e4e4"/><path d="M22 12.5H235.5" stroke="#e4e4e4"/><path d="M22 18.5H235.5" stroke="#e4e4e4"/><path d="M22 24.5H235.5" stroke="#e4e4e4"/><path d="M22 30.5H235.5" stroke="#e4e4e4"/><path d="M22 36.5H235.5" stroke="#e4e4e4"/><path d="M22 42.5H235.5" stroke="#e4e4e4"/><path d="M22 48.5H235.5" stroke="#e4e4e4"/><path d="M22 54.5H235.5" stroke="#e4e4e4"/><path d="M22 60.5H235.5" stroke="#e4e4e4"/><path d="M22 66.5H235.5" stroke="#e4e4e4"/><path d="M33.5 0V72" stroke="#8c8c8c"/><path d="M128.5 0V72" stroke="#8c8c8c"/><path d="M222.5 0V72" stroke="#8c8c8c"/><path d="M22 6.5H235.5" stroke="#8c8c8c"/><path d="M22 36.5H235.5" stroke="#8c8c8c"/><path d="M22 65.5H235.5" stroke="#8c8c8c"/><path d="M22 0V73M21.5 72.5H235.5" stroke="#000" stroke-width="1" fill="none"/><path d="M21.5 0V73" stroke="#000" stroke-width="1"/></svg>
<span id="t53" class="t" style="left:645.4px;top:611.7px;font-size:11px;line-height:15px;color:#000;letter-spacing:-0.099px;">1.0</span>
<span id="t54" class="t" style="left:645.4px;top:641.5px;font-size:11px;line-height:15px;color:#000;letter-spacing:-0.099px;">0.5</span>
<span id="t55" class="t" style="left:654.6px;top:670.7px;font-size:11px;line-height:15px;color:#000;letter-spacing:-0.325px;">0</span>
<span id="t56" class="t" style="left:673.6px;top:684.9px;font-size:11px;line-height:15px;color:#000;letter-spacing:-0.325px;">0</span>
<span id="t57" class="t" style="left:763.6px;top:684.9px;font-size:11px;line-height:15px;color:#000;letter-spacing:0.234px;">0.5</span>
<span id="t58" class="t" style="left:858.7px;top:684.9px;font-size:11px;line-height:15px;color:#000;letter-spacing:-0.199px;">1.0</span>
<div style="left:799px;top:710px;width:80px;height:21px;background:linear-gradient(#fefefe,#eeeeee);border:1px solid #a8a8a8;border-radius:3px;"></div>
<span id="t59" class="t" style="left:810.0px;top:714.0px;font-size:11px;line-height:15px;color:#000;letter-spacing:-0.191px;">Auto Range</span>
<span id="t60" class="t" style="left:897px;top:160.5px;font-size:11px;line-height:15px;color:#000;letter-spacing:-0.521px;">FLO-2D</span>
<svg style="left:1339px;top:162px" width="11" height="11"><rect x="0.5" y="0.5" width="10" height="10" rx="2" fill="#f7f7f7" stroke="#6c6862"/><rect x="4.6" y="2.6" width="4" height="4" rx="0.8" fill="none" stroke="#5c5852" stroke-width="0.9"/><rect x="2.6" y="4.6" width="4" height="4" rx="0.8" fill="#f7f7f7" stroke="#5c5852" stroke-width="0.9"/></svg>
<svg style="left:1353px;top:162px" width="11" height="11"><rect x="0.5" y="0.5" width="10" height="10" rx="2" fill="#f7f7f7" stroke="#6c6862"/><path d="M2.8 2.8L8.2 8.2M8.2 2.8L2.8 8.2" stroke="#56524c" stroke-width="1.7" fill="none"/></svg>
<div style="left:903px;top:186px;width:454px;height:545px;background:#f0f0f0;border:1px solid #a6a6a6;border-top-color:#8c8c8c;"></div>
<div style="left:1342px;top:187px;width:14px;height:543px;background:#e1e1e1;border-left:1px solid #b0b0b0;"></div>
<div style="left:1342px;top:186px;width:15px;height:15px;background:linear-gradient(#fff,#f0f0f0);border:1px solid #b0b0b0;"></div>
<div style="left:1342px;top:716px;width:15px;height:15px;background:linear-gradient(#fff,#f0f0f0);border:1px solid #b0b0b0;"></div>
<div style="left:1342px;top:200px;width:15px;height:322px;background:linear-gradient(90deg,#fff,#f2f2f2);border:1px solid #b0b0b0;"></div>
<svg style="left:1345.5px;top:191px" width="8" height="5"><path d="M0 4.5H8L4 0Z" fill="#444"/></svg>
<svg style="left:1345.5px;top:721px" width="8" height="5"><path d="M0 0H8L4 4.5Z" fill="#444"/></svg>
<div style="left:906px;top:189px;width:24px;height:23.5px;background:linear-gradient(#fefefe,#ececec);border:1px solid #a8a8a8;border-radius:3px;"></div>
<svg style="left:910.0px;top:192.0px" width="16" height="16" viewBox="0 0 24 24"><path d="M1.8 3H13" stroke="#8a6a4a" stroke-width="1.2"/><path d="M3 9.8H7.6M3 18.6H7.6" stroke="#777" stroke-width="2.4"/><path d="M16.9 0.6L23.8 9.6H19.7V20.8H14.3V9.6H9.9Z" fill="#4f80bc" stroke="#3a66a0" stroke-width="0.9" stroke-linejoin="round"/></svg>
<div style="left:936px;top:189px;width:24px;height:23.5px;background:linear-gradient(#fefefe,#ececec);border:1px solid #a8a8a8;border-radius:3px;"></div>
<svg style="left:940.0px;top:192.0px" width="16" height="16" viewBox="0 0 24 24"><rect x="1.4" y="1.2" width="21.2" height="21.4" fill="#dbe6f5" stroke="#9db8de" stroke-width="1.2"/><rect x="1.4" y="1.2" width="21.2" height="5" fill="#8faedb"/><path d="M5.6 1.2V6.2M18.4 1.2V6.2" stroke="#c9d9ee" stroke-width="1"/><path d="M4 10H9.4M11.6 10H20M4 13.6H9.4M11.6 13.6H20M4 17.2H9.4M11.6 17.2H20M4 20.6H9.4M11.6 20.6H20" stroke="#7fa2d8" stroke-width="1.2"/></svg>
<div style="left:966px;top:189px;width:24px;height:23.5px;background:linear-gradient(#fefefe,#ececec);border:1px solid #a8a8a8;border-radius:3px;"></div>
<svg style="left:970.0px;top:192.0px" width="16" height="16" viewBox="0 0 24 24"><rect x="1.6" y="1.2" width="21" height="20.6" fill="#f7f7f5"/><path d="M12 1.2V21.8M17.4 1.2V21.8M1.6 7.4H22.6M1.6 14.6H22.6" stroke="#d6d6d2" stroke-width="0.9"/><path d="M3.4 20.6Q3.8 4.4 22.6 2.8" fill="none" stroke="#8cc88c" stroke-width="1.7"/><path d="M1.6 1.2V21.8H22.8" fill="none" stroke="#555" stroke-width="1.5"/></svg>
<div style="left:996px;top:189px;width:24px;height:23.5px;background:linear-gradient(#fefefe,#ececec);border:1px solid #a8a8a8;border-radius:3px;"></div>
<svg style="left:1000.0px;top:192.0px" width="16" height="16" viewBox="0 0 24 24"><path d="M1.6 1.4L11.6 11.8" stroke="#c89a3a" stroke-width="2" stroke-linecap="round"/><path d="M1.6 1.4L11.6 11.8" stroke="#8a5a1a" stroke-width="0.6" transform="translate(0.7 -0.7)"/><path d="M9.4 12.6L13.8 8.4L17.4 12L13 16.4Z" fill="#d8552a" stroke="#7a2a12" stroke-width="0.8"/><path d="M13 16.4L17.4 12L23 17.6L16.4 22.6Z" fill="#f4f4f4" stroke="#3a3a3a" stroke-width="0.9"/><path d="M14.8 17.6L18.6 20.8M16.6 15.8L20.4 19.2M18.4 14L21.8 17.2" stroke="#555" stroke-width="0.8"/></svg>
<svg style="left:908.6px;top:221.8px" width="8" height="10"><path d="M0.5 0.5V9.3L7.2 4.9Z" fill="#3a3a3a" stroke="#1a1a1a" stroke-width="0.8"/></svg>
<span id="t61" class="t" style="left:925px;top:218.5px;font-size:11px;line-height:15px;color:#000;display:inline-block;transform-origin:0 50%;transform:scaleX(1.0334);font-weight:bold;">Grid Tools</span>
<svg style="left:906.8px;top:242.8px" width="11" height="8"><path d="M0.5 0.5H10.3L5.4 7Z" fill="#3a3a3a" stroke="#1a1a1a" stroke-width="0.8"/></svg>
<span id="t62" class="t" style="left:925px;top:237.5px;font-size:11px;line-height:15px;color:#000;display:inline-block;transform-origin:0 50%;transform:scaleX(1.0568);font-weight:bold;">Pre-processing Tools</span>
<div style="left:905px;top:255px;width:437px;height:475px;background:#ececec;border:1px solid #dadada;border-bottom:none;border-radius:3px 3px 0 0;"></div>
<svg style="left:924.4px;top:276.6px" width="11" height="8"><path d="M0.5 0.5H10.5L5.5 7Z" fill="#333" stroke="#111" stroke-width="0.8"/></svg>
<span id="t63" class="t" style="left:943.2px;top:271.5px;font-size:11px;line-height:15px;color:#000;display:inline-block;transform-origin:0 50%;transform:scaleX(1.0857);font-weight:bold;">Dam Removal</span>
<div style="left:923px;top:289px;width:401px;height:441px;background:#e9e9e9;border:1px solid #d6d6d6;border-bottom:none;border-radius:3px 3px 0 0;"></div>
<span id="t64" class="t" style="left:933.3px;top:307.5px;font-size:11px;line-height:15px;color:#000;letter-spacing:-0.214px;">Dam Area Shapefile</span>
<div style="left:1166px;top:299px;width:32px;height:31px;background:linear-gradient(#fefefe,#ebebeb);border:1px solid #a8a8a8;border-radius:3px;"></div>
<svg style="left:1170.0px;top:302.0px" width="24" height="24" viewBox="0 0 24 24"><path d="M2 4.4Q6 0.2 12 2.2Q16.6 4 21.4 2.6Q23.8 6.6 21.6 10.6Q17.6 11.4 15.4 12.4Q11.4 13.8 7 12.4Q-0.2 9.6 2 4.4Z" fill="#8cba8c" stroke="#6e7a6e" stroke-width="0.9"/><rect x="12.8" y="12.8" width="11.2" height="11.2" rx="1.6" fill="#c8a41c"/><path d="M18.4 14.4V22.4M14.9 16.4L21.9 20.4M21.9 16.4L14.9 20.4" stroke="#fff" stroke-width="1.5"/><circle cx="18.4" cy="18.4" r="1.2" fill="#c8a41c"/></svg>
<div style="left:1204px;top:299px;width:32px;height:31px;background:linear-gradient(#fefefe,#ebebeb);border:1px solid #a8a8a8;border-radius:3px;"></div>
<svg style="left:1208.0px;top:302.0px" width="24" height="24" viewBox="0 0 24 24"><rect x="1.2" y="1.4" width="19.6" height="19.4" rx="2.2" fill="#5b88b4" stroke="#4a769e" stroke-width="0.9"/><rect x="4.4" y="2.6" width="12.8" height="8" fill="#f2f2f2" stroke="#9a9a9a" stroke-width="0.5"/><path d="M6 4.8H15.6M6 6.6H15.6M6 8.4H15.6" stroke="#8e8e8e" stroke-width="0.8"/><rect x="5.4" y="13.8" width="11" height="6.4" fill="#e6e6e6"/><rect x="7.2" y="15" width="2.4" height="3.8" fill="#5b88b4"/><path d="M20.4 8.4L23.8 10.6L17 21L13.6 18.8Z" fill="#e8742c" stroke="#a8501e" stroke-width="0.6"/><path d="M21.4 9L22.8 10" stroke="#f4d8c0" stroke-width="1.6"/><path d="M13.6 18.8L17 21L13.2 23.8Z" fill="#c8c8c8" stroke="#7a7a7a" stroke-width="0.5"/></svg>
<div style="left:1242px;top:299px;width:32px;height:31px;background:linear-gradient(#fefefe,#ebebeb);border:1px solid #a8a8a8;border-radius:3px;"></div>
<svg style="left:1246.0px;top:302.0px" width="24" height="24" viewBox="0 0 24 24"><path d="M9.6 4V2.6H14.4V4" fill="none" stroke="#d40000" stroke-width="1.3"/><path d="M3.9 5.6H20.1" stroke="#d40000" stroke-width="2.2"/><path d="M4.9 9.2H19.1L17.9 22.2H6.1Z" fill="#fff" stroke="#d40000" stroke-width="1.9" stroke-linejoin="round"/><path d="M9 10V21.4M12 10V21.4M15 10V21.4" stroke="#e05a5a" stroke-width="1.5"/></svg>
<div style="left:1280px;top:299px;width:32px;height:31px;background:linear-gradient(#fefefe,#ebebeb);border:1px solid #a8a8a8;border-radius:3px;"></div>
<svg style="left:1284.0px;top:302.0px" width="24" height="24" viewBox="0 0 24 24"><rect x="2.2" y="1.4" width="19.6" height="20.4" rx="0.8" fill="#6c98cc" stroke="#1f3042" stroke-width="1"/><rect x="2.2" y="1.4" width="4.6" height="20.4" fill="#2b3f52"/><text x="11" y="16.6" font-family="Liberation Serif, serif" font-size="14" fill="#fff">?</text></svg>
<div style="left:1012px;top:336px;width:300px;height:22px;background:linear-gradient(#fcfcfc,#ececec);border:1px solid #b4b4b4;border-radius:3px;"></div>
<svg style="left:1297.0px;top:345.75px" width="7" height="3.5"><path d="M0 0H7L3.5 3.5Z" fill="#8c8c8c"/></svg>
<span id="t65" class="t" style="left:933.7px;top:368.5px;font-size:11px;line-height:15px;color:#000;letter-spacing:-0.398px;">Side slope</span>
<div style="left:1204px;top:365px;width:108px;height:20px;background:#fff;border:1px solid #a8a8a8;border-radius:3px;"></div>
<div style="left:1297.4px;top:366px;width:13.6px;height:18px;background:linear-gradient(#fefefe,#ececec);border-left:1px solid #c4c4c4;border-radius:0 3px 3px 0;"></div>
<svg style="left:1300.8px;top:369.4px" width="7.2" height="4.2"><path d="M0 4.2H7.2L3.6 0Z" fill="#555"/></svg>
<svg style="left:1300.8px;top:376.2px" width="7.2" height="4"><path d="M0 0H7.2L3.6 3.8Z" fill="#a6a6a6"/></svg>
<span id="t66" class="t" style="left:1208.8px;top:368.6px;font-size:11px;line-height:15px;color:#000;letter-spacing:0.020px;">0.00</span>
<span id="t67" class="t" style="left:933.7px;top:396.5px;font-size:11px;line-height:15px;color:#000;letter-spacing:-0.225px;">Dam elevation</span>
<div style="left:1204px;top:393px;width:108px;height:20px;background:#fff;border:1px solid #a8a8a8;border-radius:3px;"></div>
<div style="left:1297.4px;top:394px;width:13.6px;height:18px;background:linear-gradient(#fefefe,#ececec);border-left:1px solid #c4c4c4;border-radius:0 3px 3px 0;"></div>
<svg style="left:1300.8px;top:397.4px" width="7.2" height="4.2"><path d="M0 4.2H7.2L3.6 0Z" fill="#555"/></svg>
<svg style="left:1300.8px;top:404.2px" width="7.2" height="4"><path d="M0 0H7.2L3.6 3.8Z" fill="#a6a6a6"/></svg>
<span id="t68" class="t" style="left:1208.8px;top:396.6px;font-size:11px;line-height:15px;color:#000;letter-spacing:0.020px;">0.00</span>
<span id="t69" class="t" style="left:933.7px;top:424.5px;font-size:11px;line-height:15px;color:#000;letter-spacing:-0.094px;">Dam invert elevation</span>
<div style="left:1204px;top:421px;width:108px;height:20px;background:#fff;border:1px solid #a8a8a8;border-radius:3px;"></div>
<div style="left:1297.4px;top:422px;width:13.6px;height:18px;background:linear-gradient(#fefefe,#ececec);border-left:1px solid #c4c4c4;border-radius:0 3px 3px 0;"></div>
<svg style="left:1300.8px;top:425.4px" width="7.2" height="4.2"><path d="M0 4.2H7.2L3.6 0Z" fill="#555"/></svg>
<svg style="left:1300.8px;top:432.2px" width="7.2" height="4"><path d="M0 0H7.2L3.6 3.8Z" fill="#a6a6a6"/></svg>
<span id="t70" class="t" style="left:1208.8px;top:424.6px;font-size:11px;line-height:15px;color:#000;letter-spacing:0.020px;">0.00</span>
<span id="t71" class="t" style="left:933.7px;top:452.5px;font-size:11px;line-height:15px;color:#000;letter-spacing:0.114px;">Intervals</span>
<div style="left:1204px;top:449px;width:108px;height:20px;background:#fff;border:1px solid #a8a8a8;border-radius:3px;"></div>
<div style="left:1297.4px;top:450px;width:13.6px;height:18px;background:linear-gradient(#fefefe,#ececec);border-left:1px solid #c4c4c4;border-radius:0 3px 3px 0;"></div>
<svg style="left:1300.8px;top:453.4px" width="7.2" height="4.2"><path d="M0 4.2H7.2L3.6 0Z" fill="#555"/></svg>
<svg style="left:1300.8px;top:460.2px" width="7.2" height="4"><path d="M0 0H7.2L3.6 3.8Z" fill="#444"/></svg>
<span id="t72" class="t" style="left:1208.8px;top:452.6px;font-size:11px;line-height:15px;color:#000;letter-spacing:-0.625px;">10</span>
<div style="left:1069px;top:476px;width:129px;height:21px;background:linear-gradient(#fefefe,#eeeeee);border:1px solid #a8a8a8;border-radius:3px;"></div>
<span id="t73" class="t" style="left:1089.1px;top:480.0px;font-size:11px;line-height:15px;color:#000;letter-spacing:-0.091px;">Estimate reservoir</span>
<div style="left:934px;top:503px;width:378px;height:2px;background:#9c9c9c;border-bottom:1px solid #fff;"></div>
<span id="t74" class="t" style="left:933.3px;top:520.5px;font-size:11px;line-height:15px;color:#787878;letter-spacing:-0.259px;">Channel Shapefile</span>
<div style="left:1204px;top:512px;width:32px;height:31px;background:linear-gradient(#f6f6f6,#e9e9e9);border:1px solid #bcbcbc;border-radius:3px;"></div>
<svg style="left:1208.0px;top:515.0px" width="24" height="24" viewBox="0 0 24 24"><path d="M9.6 4V2.6H14.4V4" fill="none" stroke="#dcc6c6" stroke-width="1.3"/><path d="M3.9 5.6H20.1" stroke="#dcc6c6" stroke-width="2.2"/><path d="M4.9 9.2H19.1L17.9 22.2H6.1Z" fill="#f4f0f0" stroke="#dcc6c6" stroke-width="1.9" stroke-linejoin="round"/><path d="M9 10V21.4M12 10V21.4M15 10V21.4" stroke="#e4d2d2" stroke-width="1.5"/></svg>
<div style="left:1242px;top:512px;width:32px;height:31px;background:linear-gradient(#f6f6f6,#e9e9e9);border:1px solid #bcbcbc;border-radius:3px;"></div>
<svg style="left:1246.0px;top:515.0px" width="24" height="24" viewBox="0 0 24 24"><rect x="1.2" y="1.4" width="19.6" height="19.4" rx="2.2" fill="#d2d2d2"/><rect x="4.4" y="2.6" width="12.8" height="8" fill="#e6e6e6"/><path d="M6 4.8H15.6M6 6.6H15.6M6 8.4H15.6" stroke="#d4d4d4" stroke-width="0.8"/><rect x="5.4" y="13.8" width="11" height="6.4" fill="#e4e4e4"/><rect x="7.2" y="15" width="2.4" height="3.8" fill="#cacaca"/><path d="M20.4 8.4L23.8 10.6L17 21L13.2 23.8L13.6 18.8Z" fill="#dad4d0"/></svg>
<div style="left:1280px;top:512px;width:32px;height:31px;background:linear-gradient(#f6f6f6,#e9e9e9);border:1px solid #bcbcbc;border-radius:3px;"></div>
<svg style="left:1284.0px;top:515.0px" width="24" height="24" viewBox="0 0 24 24"><path d="M2 4.4Q6 0.2 12 2.2Q16.6 4 21.4 2.6Q23.8 6.6 21.6 10.6Q17.6 11.4 15.4 12.4Q11.4 13.8 7 12.4Q-0.2 9.6 2 4.4Z" fill="#dadad6" stroke="#d0d0cc" stroke-width="0.9"/><rect x="12.8" y="12.8" width="11.2" height="11.2" rx="1.6" fill="#d4d3cc"/><path d="M18.4 14.4V22.4M14.9 16.4L21.9 20.4M21.9 16.4L14.9 20.4" stroke="#eeeeec" stroke-width="1.4"/></svg>
<div style="left:1012px;top:549px;width:300px;height:22px;background:linear-gradient(#fcfcfc,#ececec);border:1px solid #b4b4b4;border-radius:3px;"></div>
<svg style="left:1297.0px;top:558.75px" width="7" height="3.5"><path d="M0 0H7L3.5 3.5Z" fill="#8c8c8c"/></svg>
<div style="left:934px;top:577px;width:378px;height:2px;background:#9c9c9c;border-bottom:1px solid #fff;"></div>
<span id="t75" class="t" style="left:933.3px;top:590.5px;font-size:11px;line-height:15px;color:#787878;letter-spacing:0.048px;">Input Raster</span>
<div style="left:1012px;top:586px;width:300px;height:22px;background:linear-gradient(#fcfcfc,#ececec);border:1px solid #b4b4b4;border-radius:3px;"></div>
<svg style="left:1297.0px;top:595.75px" width="7" height="3.5"><path d="M0 0H7L3.5 3.5Z" fill="#8c8c8c"/></svg>
<div style="left:1069px;top:614px;width:129px;height:21px;background:linear-gradient(#fefefe,#eeeeee);border:1px solid #bcbcbc;border-radius:3px;"></div>
<span id="t76" class="t" style="left:1101.1px;top:618.0px;font-size:11px;line-height:15px;color:#787878;letter-spacing:-0.425px;">Remove Dam</span>
<div style="left:934px;top:641px;width:378px;height:2px;background:#9c9c9c;border-bottom:1px solid #fff;"></div>
<div style="left:934px;top:650px;width:378px;height:70px;background:#fff;border:1px solid #a6a6a6;border-top-color:#8c8c8c;"></div>
<div style="left:0px;top:742px;width:1366px;height:26px;background:#f0f0f0;"></div>
<div style="left:4px;top:743px;width:200px;height:22px;background:#fff;border:1px solid #a8a8a8;border-radius:3px;"></div>
<svg style="left:12.5px;top:748.5px" width="13" height="13"><circle cx="5" cy="5" r="4" fill="none" stroke="#777" stroke-width="1.2"/><path d="M8 8L12 12" stroke="#777" stroke-width="1.4"/></svg>
<span id="t77" class="t" style="left:32px;top:747.5px;font-size:11px;line-height:15px;color:#7a7a7a;letter-spacing:0.054px;">Type to locate (Ctrl+K)</span>
<div style="left:48.5px;top:766.5px;width:287px;height:2px;background:#fff;border:1px solid #c0c0c0;"></div>
<span id="t78" class="t" style="left:556.5px;top:747.8px;font-size:11px;line-height:15px;color:#000;letter-spacing:-0.083px;">Coordinate</span>
<div style="left:613.5px;top:743.6px;width:104.7px;height:20.8px;background:#fff;border:1px solid #a8a8a8;border-radius:3px;"></div>
<span id="t79" class="t" style="left:619px;top:747.8px;font-size:11px;line-height:15px;color:#000;letter-spacing:0.015px;">6039079, 7742886</span>
<svg style="left:722.0px;top:746.0px" width="18" height="18" viewBox="0 0 24 24"><path d="M2.4 3L9 9.4M1.6 8.4L8 11.4M8 1.4L11 8" stroke="#333" stroke-width="1.5"/><path d="M4 2.6L13 8.6L8 13.4Q3 10 4 2.6Z" fill="#4a4a4a"/><path d="M9 9.6Q13 6.4 17.4 10.4Q21 14.6 18.6 19.4Q16 23 11.6 20.6Q7 17.6 9 9.6Z" fill="#f2f2f2" stroke="#333" stroke-width="1.5"/><ellipse cx="14" cy="17.6" rx="2.4" ry="1.8" fill="#fff" stroke="#333" stroke-width="1.2" transform="rotate(35 14 17.6)"/><path d="M17 3L19.4 1.4M19 6L21.6 5.4" stroke="#555" stroke-width="1.1"/></svg>
<span id="t80" class="t" style="left:751px;top:747.8px;font-size:11px;line-height:15px;color:#000;letter-spacing:-0.506px;">Scale</span>
<div style="left:780.2px;top:743.6px;width:80.3px;height:20.8px;background:#fff;border:1px solid #a8a8a8;border-radius:3px;"></div>
<div style="left:840.4px;top:744.6px;width:19.2px;height:18.8px;background:linear-gradient(#fefefe,#ececec);border-left:1px solid #c0c0c0;border-radius:0 3px 3px 0;"></div>
<span id="t81" class="t" style="left:784.6px;top:747.8px;font-size:11px;line-height:15px;color:#000;letter-spacing:-0.038px;">1:84714</span>
<svg style="left:846.1px;top:753.55px" width="7" height="3.5"><path d="M0 0H7L3.5 3.5Z" fill="#7a7a7a"/></svg>
<svg style="left:871.0px;top:747.0px" width="16" height="16" viewBox="0 0 24 24"><path d="M7 11V7.6Q7 3 12 3Q17 3 17 7.6V11" fill="none" stroke="#6e6e6e" stroke-width="2.4"/><rect x="4" y="10.4" width="16" height="11.6" rx="1.6" fill="#7a7a7a"/><path d="M4 14H20M4 17.6H20" stroke="#8e8e8e" stroke-width="0.9"/></svg>
<span id="t82" class="t" style="left:893px;top:747.8px;font-size:11px;line-height:15px;color:#000;letter-spacing:-0.083px;">Magnifier</span>
<div style="left:941.3px;top:743.6px;width:83.5px;height:20.8px;background:#fff;border:1px solid #a8a8a8;border-radius:3px;"></div>
<div style="left:1010.3px;top:744.6px;width:13.5px;height:18.8px;background:linear-gradient(#fefefe,#ececec);border-left:1px solid #c4c4c4;border-radius:0 3px 3px 0;"></div>
<svg style="left:1013.8px;top:748.2px" width="7" height="4"><path d="M0 4H7L3.5 0Z" fill="#5a5a5a"/></svg>
<svg style="left:1013.8px;top:757.2px" width="7" height="4"><path d="M0 0H7L3.5 4Z" fill="#5a5a5a"/></svg>
<span id="t83" class="t" style="left:946.3px;top:747.8px;font-size:11px;line-height:15px;color:#000;letter-spacing:0.090px;">100%</span>
<span id="t84" class="t" style="left:1033px;top:747.8px;font-size:11px;line-height:15px;color:#000;letter-spacing:0.064px;">Rotation</span>
<div style="left:1084.2px;top:743.6px;width:83.5px;height:20.8px;background:#fff;border:1px solid #a8a8a8;border-radius:3px;"></div>
<div style="left:1153.2px;top:744.6px;width:13.5px;height:18.8px;background:linear-gradient(#fefefe,#ececec);border-left:1px solid #c4c4c4;border-radius:0 3px 3px 0;"></div>
<svg style="left:1156.7px;top:748.2px" width="7" height="4"><path d="M0 4H7L3.5 0Z" fill="#5a5a5a"/></svg>
<svg style="left:1156.7px;top:757.2px" width="7" height="4"><path d="M0 0H7L3.5 4Z" fill="#5a5a5a"/></svg>
<span id="t85" class="t" style="left:1089.2px;top:747.8px;font-size:11px;line-height:15px;color:#000;letter-spacing:0.450px;">0.0 °</span>
<div style="left:1174px;top:747.5px;width:13.8px;height:13.8px;background:#fff;border:1px solid #b0b0b0;"></div>
<svg style="left:1174px;top:747.5px" width="14" height="14"><path d="M3.2 7.2L6.4 10.8L10.8 3.2" stroke="#000" stroke-width="1.8" fill="none"/></svg>
<span id="t86" class="t" style="left:1192px;top:747.8px;font-size:11px;line-height:15px;color:#000;letter-spacing:-0.180px;">Render</span>
<svg style="left:1242.5px;top:747.0px" width="16" height="16" viewBox="0 0 24 24"><ellipse cx="12" cy="13" rx="10" ry="9.4" fill="#f4f4f4" stroke="#6a6a6a" stroke-width="1.2"/><ellipse cx="12" cy="13" rx="4.4" ry="9.4" fill="none" stroke="#6a6a6a" stroke-width="1"/><path d="M2 13H22M12 3.6V22.4M3.6 8.4H20.4M3.6 17.6H20.4" stroke="#6a6a6a" stroke-width="1"/><path d="M5 4.6L12 1L19 4.6" fill="none" stroke="#5a5a5a" stroke-width="1.3"/></svg>
<span id="t87" class="t" style="left:1259.5px;top:747.8px;font-size:11px;line-height:15px;color:#000;letter-spacing:-0.372px;">EPSG:29101</span>
<svg style="left:1342.7px;top:746.1px" width="17" height="17" viewBox="0 0 24 24"><path d="M12 2.4Q22.8 2.4 22.8 11Q22.8 19.6 12 19.6Q10 19.6 8.4 19.2L4 22.6L5 17.6Q1.2 15.4 1.2 11Q1.2 2.4 12 2.4Z" fill="#6e6e6e"/><circle cx="6.8" cy="11" r="1.7" fill="#f4f4f4"/><circle cx="12" cy="11" r="1.7" fill="#f4f4f4"/><circle cx="17.2" cy="11" r="1.7" fill="#f4f4f4"/></svg>
</body></html>
